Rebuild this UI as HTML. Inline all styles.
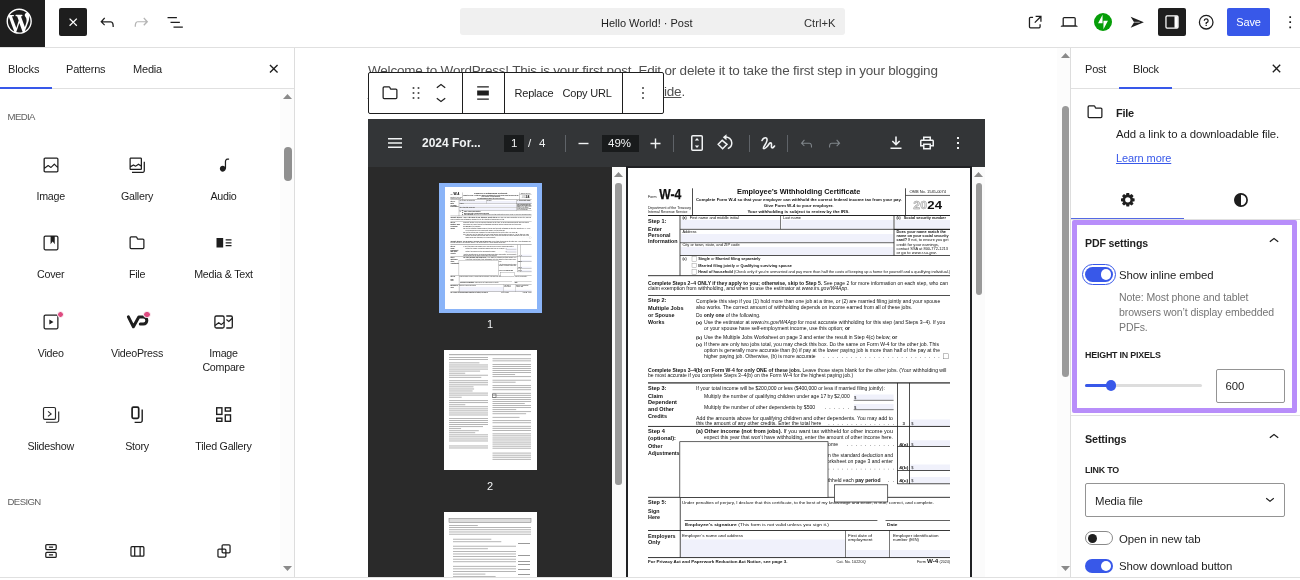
<!DOCTYPE html>
<html lang="en">
<head>
<meta charset="utf-8">
<title>Edit Post - Hello World!</title>
<style>
*{box-sizing:border-box;margin:0;padding:0}
html,body{width:1300px;height:580px;overflow:hidden;background:#fff}
body{position:relative;font-family:"Liberation Sans",sans-serif;font-size:13px;color:#1e1e1e}
.abs{position:absolute}
svg{display:block;overflow:visible}
/* top bar */
#topbar{left:0;top:0;width:1300px;height:48px;background:#fff;border-bottom:1px solid #e0e0e0}
#wplogo{left:0;top:0;width:45px;height:47px;background:#1e1e1e}
.darkbtn{background:#1e1e1e;border-radius:2px}
#cmd{left:460px;top:8px;width:385px;height:27px;background:#f0f0f0;border-radius:3px}
#save{left:1227px;top:8px;width:43px;height:28px;background:#3858e9;border-radius:2px;color:#fff;font-size:11px;letter-spacing:-0.2px;line-height:28px;text-align:center}
/* left panel */
#left{left:0;top:48px;width:295px;height:532px;background:#fff;border-right:1px solid #ddd}
#ltabs{left:0;top:0;width:294px;height:41px;border-bottom:1px solid #e0e0e0}
.tab{position:absolute;top:1px;height:40px;line-height:40px;font-size:11px;letter-spacing:-0.2px;color:#1e1e1e;white-space:nowrap}
.blk{position:absolute;width:87px;text-align:center;font-size:10.7px;letter-spacing:-0.25px;line-height:14.5px;color:#1e1e1e}
.cat{position:absolute;left:7.5px;margin-top:1px;font-size:9.6px;color:#5f5f5f;letter-spacing:-0.6px;text-transform:uppercase}
/* canvas */
#canvas{left:295px;top:48px;width:776px;height:532px;background:#fff}
.ptxt{position:absolute;font-size:13.5px;line-height:16px;color:#505050;white-space:nowrap;letter-spacing:-0.2px}
#btoolbar{left:368px;top:72px;width:296px;height:42px;background:#fff;border:1px solid #1e1e1e;border-radius:2px}
.tdiv{position:absolute;top:0;width:1px;height:40px;background:#1e1e1e}
/* pdf */
#pdf{left:368px;top:119px;width:617px;height:458px;background:#525659;overflow:hidden}
#pdfbar{left:0;top:0;width:617px;height:48px;background:#333537}
#thumbs{left:0;top:48px;width:244px;height:413px;background:#2a2a2a}
#page{left:260px;top:49px;width:341.500px;height:412px;background:#fff;overflow:hidden;will-change:transform}
/* right */
#right{left:1070px;top:48px;width:230px;height:532px;background:#fff;border-left:1px solid #ddd}
.rt{position:absolute;font-size:11.4px;line-height:14px;letter-spacing:-0.1px;color:#1e1e1e;white-space:nowrap}
.rt.note{color:#757575;font-size:10.500px}
.rt.lbl{font-size:8.9px;font-weight:bold;letter-spacing:-0.2px;line-height:12px}
.pt{position:absolute;top:0;line-height:48px;font-size:11.500px;color:#f1f3f4;white-space:nowrap}
.pdiv{position:absolute;margin-left:-1px;top:16px;width:1px;height:17px;background:#5f6368}
.thp{background:#fff}
.tl{position:absolute;width:20px;text-align:center;font-size:11px;line-height:14px;color:#f1f3f4}
#app{position:absolute;left:0;top:0;width:1300px;height:580px;overflow:hidden;background:#fff;will-change:transform}
</style>
</head>
<body>
<div id="app">
<!-- ===== TOP BAR ===== -->
<div id="topbar" class="abs"></div>
<div id="wplogo" class="abs">
  <svg class="abs" style="left:4.300px;top:5.900px" width="30.400" height="30.400" viewBox="-2 -2 24 24"><path fill="#fff" d="M20 10c0-5.510-4.490-10-10-10C4.480 0 0 4.490 0 10c0 5.520 4.480 10 10 10 5.510 0 10-4.480 10-10zM7.780 15.370L4.370 6.220c.55-.02 1.170-.08 1.170-.08.500-.06.440-1.130-.06-1.110 0 0-1.450.11-2.370.11-.18 0-.37 0-.58-.01C4.120 2.690 6.870 1.110 10 1.110c2.330 0 4.450.87 6.050 2.340-.68-.11-1.650.39-1.650 1.580 0 .74.450 1.360.9 2.100.35.610.55 1.360.55 2.460 0 1.490-1.400 5-1.400 5l-3.030-8.370c.54-.02.820-.17.820-.17.500-.05.440-1.250-.06-1.220 0 0-1.440.12-2.380.12-.87 0-2.330-.12-2.330-.12-.5-.03-.56 1.200-.06 1.220l.920.08 1.260 3.410zM17.410 10c.24-.64.740-1.870.430-4.250.7 1.290 1.050 2.710 1.050 4.250 0 3.290-1.730 6.240-4.400 7.780.97-2.590 1.940-5.200 2.920-7.780zM6.100 18.090C3.120 16.650 1.110 13.530 1.110 10c0-1.300.23-2.480.72-3.590C3.250 10.300 4.670 14.200 6.100 18.090zm4.030-6.630l2.580 6.980c-.86.290-1.760.45-2.710.45-.79 0-1.570-.11-2.290-.33.810-2.380 1.620-4.740 2.420-7.100z"/></svg>
</div>
<div class="abs darkbtn" style="left:59px;top:8px;width:27.500px;height:27.500px">
  <svg class="abs" style="left:3.800px;top:3.800px" width="20.400" height="20.400" viewBox="0 0 24 24"><path fill="#fff" d="M12 13.060l3.712 3.713 1.061-1.060L13.061 12l3.712-3.712-1.060-1.060L12 10.938 8.288 7.227l-1.061 1.060L10.939 12l-3.712 3.712 1.060 1.061L12 13.061z"/></svg>
</div>
<svg class="abs" style="left:96.8px;top:11.8px" width="20.400" height="20.400" viewBox="0 0 24 24"><path fill="#1e1e1e" d="M18.300 11.700c-.6-.6-1.400-.9-2.300-.9H6.700l2.900-3.300-1.100-1-4.500 5L8.500 16l1-1-2.700-2.700H16c.5 0 .9.200 1.300.5 1 1 1 3.400 1 4.500v.3h1.500v-.2c0-1.500 0-4.300-1.500-5.700z"/></svg>
<svg class="abs" style="left:130.8px;top:11.8px" width="20.400" height="20.400" viewBox="0 0 24 24"><path fill="#b4b4b4" d="M15.600 6.500l-1.100 1 2.900 3.300H8c-.9 0-1.700.3-2.300.9-1.400 1.500-1.400 4.200-1.400 5.600v.2h1.500v-.3c0-1.100 0-3.500 1-4.500.3-.3.700-.5 1.300-.5h9.200L14.500 15l1.100 1.100 4.600-4.600-4.600-5z"/></svg>
<svg class="abs" style="left:164.8px;top:11.8px" width="20.400" height="20.400" viewBox="0 0 24 24"><path fill="#1e1e1e" d="M3 6h11v1.500H3V6Zm3.500 5.500h11V13h-11v-1.500ZM21 17H10v1.500h11V17Z"/></svg>

<div id="cmd" class="abs">
  <span class="abs" style="left:141px;top:1.5px;line-height:27px;font-size:11px;color:#1e1e1e;white-space:nowrap">Hello World! · Post</span>
  <span class="abs" style="left:344px;top:2px;line-height:27px;font-size:11.2px;color:#333;white-space:nowrap">Ctrl+K</span>
</div>

<svg class="abs" style="left:1024.8px;top:11.8px" width="20.400" height="20.400" viewBox="0 0 24 24"><path fill="#1e1e1e" d="M19.500 4.500h-7V6h4.440l-5.970 5.970 1.060 1.060L18 7.060v4.440h1.500v-7Zm-13 1a2 2 0 0 0-2 2v10a2 2 0 0 0 2 2h10a2 2 0 0 0 2-2v-3H17v3a.5.500 0 0 1-.5.500h-10a.5.500 0 0 1-.5-.5v-10a.5.500 0 0 1 .5-.5h3V5.500h-3Z"/></svg>
<svg class="abs" style="left:1058.8px;top:11.8px" width="20.400" height="20.400" viewBox="0 0 24 24"><path fill="#1e1e1e" d="M20.500 16h-.7V8c0-1.100-.9-2-2-2H6.200c-1.100 0-2 .9-2 2v8h-.7c-.8 0-1.500.7-1.500 1.500h20c0-.8-.7-1.500-1.500-1.500zM5.700 8c0-.3.200-.5.500-.5h11.600c.3 0 .5.200.5.500v7.600H5.700V8z"/></svg>
<svg class="abs" style="left:1093.500px;top:13px" width="18" height="18" viewBox="0 0 32 32"><circle cx="16" cy="16" r="16" fill="#069e08"/><path fill="#fff" d="M15.200 2.900v15.500H7.200zM16.800 29.100V13.600h8z"/></svg>
<svg class="abs" style="left:1129px;top:14px" width="16.500" height="16.500" viewBox="0 0 20 20"><path fill="#1e1e1e" d="M2 3.200l16 6.800-16 6.800 4.200-6.800z"/><path d="M6.200 10H13" stroke="#bdbdbd" stroke-width="1.100"/></svg>
<div class="abs darkbtn" style="left:1158px;top:8px;width:27.500px;height:27.500px">
  <svg class="abs" style="left:4px;top:4px" width="20" height="20" viewBox="0 0 24 24"><rect x="4.750" y="4.750" width="14.500" height="14.500" rx="1.250" fill="none" stroke="#fff" stroke-width="1.500"/><path fill="#fff" d="M15 5h4v14h-4z"/></svg>
</div>
<svg class="abs" style="left:1195.8px;top:11.8px" width="20.400" height="20.400" viewBox="0 0 24 24"><path fill="#1e1e1e" d="M12 4.750a7.250 7.250 0 100 14.500 7.250 7.250 0 000-14.500zM3.250 12a8.750 8.750 0 1117.500 0 8.750 8.750 0 01-17.500 0zM12 8.750a1.500 1.500 0 01.167 2.990c-.465.052-.917.440-.917 1.010V14h1.500v-.845A3 3 0 109 10.250h1.500a1.500 1.500 0 011.500-1.500zM11.250 15v1.500h1.500V15h-1.500z"/></svg>
<div id="save" class="abs">Save</div>
<svg class="abs" style="left:1279.8px;top:11.8px" width="20.400" height="20.400" viewBox="0 0 24 24"><path fill="#1e1e1e" d="M13 19h-2v-2h2v2zm0-6h-2v-2h2v2zm0-6h-2V5h2v2z"/></svg>

<div id="left" class="abs">
<div id="ltabs" class="abs">
<span class="tab" style="left:8px">Blocks</span><span class="tab" style="left:66px">Patterns</span><span class="tab" style="left:133px">Media</span>
<div class="abs" style="left:0;top:39px;width:52px;height:2px;background:#3858e9"></div>
<svg class="abs" style="left:262.700px;top:9.700px" width="21.500" height="21.500" viewBox="0 0 24 24"><path fill="#1e1e1e" d="M12 13.060l3.712 3.713 1.061-1.060L13.061 12l3.712-3.712-1.060-1.060L12 10.938 8.288 7.227l-1.061 1.060L10.939 12l-3.712 3.712 1.060 1.061L12 13.061z"/></svg>
</div>
<div class="cat" style="top:62px">Media</div>
<div class="cat" style="top:447px">Design</div>
<svg class="abs" style="left:40.7px;top:106.5px" width="20" height="20" viewBox="0 0 24 24" fill="#1e1e1e"><path d="M19 3H5c-1.100 0-2 .9-2 2v14c0 1.100.9 2 2 2h14c1.100 0 2-.9 2-2V5c0-1.100-.9-2-2-2zM5 4.500h14c.3 0 .5.200.5.500v8.400l-3-2.900c-.3-.3-.8-.3-1 0L11.900 14 9 12c-.3-.2-.6-.2-.8 0l-3.600 2.600V5c-.1-.3.100-.5.400-.5zm14 15H5c-.3 0-.5-.2-.5-.5v-2.400l4.100-3 3 1.900c.3.200.7.200.9-.1L16 12l3.500 3.400V19c0 .3-.2.500-.5.500z"/></svg>
<div class="blk" style="left:7.2px;top:140.5px">Image</div>
<svg class="abs" style="left:127.0px;top:106.5px" width="20" height="20" viewBox="0 0 24 24" fill="#1e1e1e"><path d="M16.375 4.500H4.625a.125.125 0 0 0-.125.125v8.254l2.859-1.540a.750.750 0 0 1 .680-.016l2.384 1.142 2.890-2.074a.750.750 0 0 1 .874 0l2.313 1.660V4.625a.125.125 0 0 0-.125-.125Zm.125 9.398-2.750-1.975-2.813 2.020a.750.750 0 0 1-.760.067l-2.444-1.170L4.500 14.583v1.792c0 .69.056.125.125.125h11.750a.125.125 0 0 0 .125-.125v-2.477ZM4.625 3C3.728 3 3 3.728 3 4.625v11.750C3 17.273 3.728 18 4.625 18h11.750c.898 0 1.625-.727 1.625-1.625V4.625C18 3.728 17.273 3 16.375 3H4.625ZM20 8v11c0 .69-.31 1-.999 1H6v1.500h13.001c1.520 0 2.499-.982 2.499-2.500V8H20Z" fill-rule="evenodd"/></svg>
<div class="blk" style="left:93.5px;top:140.5px">Gallery</div>
<svg class="abs" style="left:213.5px;top:106.5px" width="20" height="20" viewBox="0 0 24 24" fill="#1e1e1e"><path d="M17.700 4.300c-1.200 0-2.800 0-3.800 1-.6.600-.9 1.500-.9 2.600V14c-.6-.6-1.500-1-2.500-1C8.600 13 7 14.600 7 16.500S8.600 20 10.500 20c1.500 0 2.800-1 3.300-2.300.5-.8.700-1.800.7-2.500V7.900c0-.7.200-1.200.5-1.600.6-.6 1.800-.6 2.800-.6h.3V4.300h-.4z"/></svg>
<div class="blk" style="left:180.0px;top:140.5px">Audio</div>
<svg class="abs" style="left:40.7px;top:185.0px" width="20" height="20" viewBox="0 0 24 24" fill="#1e1e1e"><path d="M18.700 3H5.300C4 3 3 4 3 5.300v13.400C3 20 4 21 5.300 21h13.400c1.300 0 2.300-1 2.300-2.300V5.300C21 4 20 3 18.700 3zm.8 15.700c0 .4-.4.800-.8.800H5.300c-.4 0-.8-.4-.8-.8V5.300c0-.4.400-.8.800-.8h6.200v8.900l2.500-3.100 2.500 3.100V4.500h2.200c.4 0 .8.400.8.800v13.400z"/></svg>
<div class="blk" style="left:7.2px;top:219.0px">Cover</div>
<svg class="abs" style="left:127.0px;top:185.0px" width="20" height="20" viewBox="0 0 24 24" fill="#1e1e1e"><path d="M12.848 8a1 1 0 0 1-.914-.594l-.723-1.630a.5.500 0 0 0-.447-.276H5a.5.500 0 0 0-.5.500v11.500a.5.500 0 0 0 .5.500h14a.5.500 0 0 0 .5-.5v-9A.5.500 0 0 0 19 8h-6.152Zm.612-1.500a.5.500 0 0 1-.462-.31l-.445-1.084A2 2 0 0 0 10.763 4H5a2 2 0 0 0-2 2v11.500a2 2 0 0 0 2 2h14a2 2 0 0 0 2-2v-9a2 2 0 0 0-2-2h-5.540Z" fill-rule="evenodd"/></svg>
<div class="blk" style="left:93.5px;top:219.0px">File</div>
<svg class="abs" style="left:213.5px;top:185.0px" width="20" height="20" viewBox="0 0 24 24" fill="#1e1e1e"><path d="M3 6v11.500h8V6H3Zm11 3h7V7.500h-7V9Zm7 3.500h-7V11h7v1.500ZM14 16h7v-1.500h-7V16Z"/></svg>
<div class="blk" style="left:180.0px;top:219.0px">Media &amp; Text</div>
<svg class="abs" style="left:40.7px;top:264.0px" width="20" height="20" viewBox="0 0 24 24" fill="#1e1e1e"><path d="M18.700 3H5.300C4 3 3 4 3 5.300v13.400C3 20 4 21 5.300 21h13.400c1.300 0 2.300-1 2.300-2.300V5.300C21 4 20 3 18.700 3zm.8 15.700c0 .4-.4.800-.8.800H5.300c-.4 0-.8-.4-.8-.8V5.300c0-.4.400-.8.800-.8h13.400c.4 0 .8.400.8.800v13.400zM10 15l5-3-5-3v6z"/></svg>
<div class="blk" style="left:7.2px;top:297.5px">Video</div>
<svg class="abs" style="left:125px;top:264px" width="24" height="20" viewBox="125 312 24 20" fill="none" stroke="#1e1e1e"><path stroke-width="3" stroke-linecap="round" stroke-linejoin="round" d="M128.400 316.800L133.400 326.800L138.800 317H143.300C148 317 148 324 143.300 324H140.300"/></svg>
<div class="blk" style="left:93.5px;top:297.5px">VideoPress</div>
<svg class="abs" style="left:212px;top:264px" width="24" height="20" viewBox="212 312 24 20" fill="none" stroke="#1e1e1e"><rect x="214.9" y="316" width="9.2" height="12" rx="1.5" stroke-width="1.3"/><path stroke-width="1.2" d="M215 325.600l3.700-2.800 2.500 1.800 3-2.400"/><path stroke-width="1.3" d="M226.300 316h4.700a1.300 1.300 0 0 1 1.300 1.300v9.400a1.300 1.300 0 0 1-1.300 1.300h-4.700"/><path stroke-width="1.300" d="M226.400 319.600l2.400 1.800 3.800-3.500"/></svg>
<div class="blk" style="left:180.0px;top:297.5px">Image<br>Compare</div>
<svg class="abs" style="left:41px;top:356px" width="20" height="20" viewBox="41 404 20 20" fill="none" stroke="#1e1e1e"><g stroke-width="1.150" stroke="#2a2a2a"><rect x="43.500" y="407.500" width="12" height="11.800" rx="1.300"/><path d="M48 411.400l3.100 2.500-3.100 2.500"/><path d="M58.700 411.500v9a1.700 1.700 0 0 1-1.700 1.700h-11"/></g></svg>
<div class="blk" style="left:7.2px;top:390.5px">Slideshow</div>
<svg class="abs" style="left:127px;top:356px" width="20" height="20" viewBox="127 404 20 20" fill="none" stroke="#1e1e1e"><rect x="132.100" y="407.100" width="6.600" height="11.200" rx="1.300" stroke-width="1.700"/><path stroke-width="1.400" d="M142.200 409.600v11a1.800 1.800 0 0 1-1.800 1.800h-5.800"/></svg>
<div class="blk" style="left:93.5px;top:390.5px">Story</div>
<svg class="abs" style="left:213px;top:356px" width="22" height="22" viewBox="213 404 22 22" fill="none" stroke="#1e1e1e"><g stroke-width="1.400"><rect x="216.700" y="407.800" width="5.200" height="6.600"/><rect x="225.300" y="407.800" width="5.200" height="3.300"/><rect x="216.700" y="418.200" width="5.200" height="3.100"/><rect x="225.300" y="414.900" width="5.200" height="6.400"/></g></svg>
<div class="blk" style="left:180.0px;top:390.5px">Tiled Gallery</div>
<svg class="abs" style="left:40.7px;top:493.0px" width="20" height="20" viewBox="0 0 24 24" fill="#1e1e1e"><path fill="none" stroke="#1e1e1e" stroke-width="1.500" d="M7 4.250h10c.7 0 1.250.55 1.250 1.250V9c0 .7-.55 1.250-1.250 1.250H7c-.7 0-1.250-.55-1.250-1.250V5.500c0-.7.550-1.250 1.250-1.250zM7 13.750h10c.7 0 1.250.55 1.250 1.250v3.500c0 .7-.55 1.250-1.250 1.250H7c-.7 0-1.250-.55-1.250-1.250V15c0-.7.550-1.250 1.250-1.250zM9.500 7.250h5M9.500 16.750h5"/></svg>
<svg class="abs" style="left:127.0px;top:493.0px" width="20" height="20" viewBox="0 0 24 24" fill="#1e1e1e"><path fill="none" stroke="#1e1e1e" stroke-width="1.500" d="M6 6.750h13c.7 0 1.250.55 1.250 1.250v9c0 .7-.55 1.250-1.250 1.250H6c-.7 0-1.250-.55-1.250-1.250V8c0-.7.550-1.250 1.250-1.250zM9.250 7v11M15.750 7v11"/></svg>
<svg class="abs" style="left:213.5px;top:493.0px" width="20" height="20" viewBox="0 0 24 24" fill="#1e1e1e"><path d="M18 4h-7c-1.100 0-2 .9-2 2v3H6c-1.100 0-2 .9-2 2v7c0 1.100.9 2 2 2h7c1.100 0 2-.9 2-2v-3h3c1.100 0 2-.9 2-2V6c0-1.100-.9-2-2-2zm-4.500 14c0 .3-.2.500-.5.500H6c-.3 0-.5-.2-.5-.5v-7c0-.3.200-.5.500-.5h3V13c0 1.100.9 2 2 2h2.500v3zm0-4.500H11c-.3 0-.5-.2-.5-.5v-2.500H13c.3 0 .5.200.5.500v2.500zm5-.5c0 .3-.2.500-.5.500h-3V11c0-1.100-.9-2-2-2h-2.500V6c0-.3.200-.5.500-.5h7c.3 0 .5.200.5.500v7z"/></svg>
<div class="abs" style="left:58px;top:264px;width:7.2px;height:7.2px;margin:-1.100px;border:1px solid #fff;border-radius:50%;background:#de4b80"></div>
<div class="abs" style="left:144.5px;top:264px;width:7.2px;height:7.2px;margin:-1.100px;border:1px solid #fff;border-radius:50%;background:#de4b80"></div>
<div class="abs" style="left:280px;top:41px;width:14px;height:488px;background:#fcfcfc"></div>
<div class="abs" style="left:284px;top:99px;width:8px;height:34px;border-radius:4px;background:#8f8f8f"></div>
<svg class="abs" style="left:283px;top:46px" width="9" height="5" viewBox="0 0 9 5"><path fill="#8a8a8a" d="M0 5L4.500 0 9 5z"/></svg>
<svg class="abs" style="left:283px;top:518px" width="9" height="5" viewBox="0 0 9 5"><path fill="#8a8a8a" d="M0 0L4.500 5 9 0z"/></svg>
</div>
<div id="canvas" class="abs"></div>
<div class="ptxt" style="left:368px;top:62.5px" id="p1">Welcome to WordPress! This is your first post. Edit or delete it to take the first step in your blogging</div>
<div class="ptxt" style="left:368px;width:317px;top:83.5px;text-align:justify;text-align-last:justify" id="p2">journey. To get help, read the <span style="text-decoration:underline">WordPress guide</span>.</div>
<!-- canvas scrollbar -->
<div class="abs" style="left:1057px;top:48px;width:13px;height:529px;background:#fcfcfc"></div>
<div class="abs" style="left:1062px;top:106px;width:7px;height:271px;border-radius:4px;background:#9a9a9a"></div>
<svg class="abs" style="left:1061px;top:53px" width="9" height="5" viewBox="0 0 9 5"><path fill="#8a8a8a" d="M0 5L4.500 0 9 5z"/></svg>
<svg class="abs" style="left:1061px;top:566px" width="9" height="5" viewBox="0 0 9 5"><path fill="#8a8a8a" d="M0 0L4.500 5 9 0z"/></svg>

<div id="pdf" class="abs">
<div id="pdfbar" class="abs">
 <svg class="abs" style="left:19px;top:16px" width="16" height="16" viewBox="0 0 16 16"><path fill="#f1f3f4" d="M1 3h14v1.600H1zM1 7.200h14v1.600H1zM1 11.400h14V13H1z"/></svg>
 <span class="pt" style="left:54px;font-weight:bold;font-size:12px">2024 For...</span>
 <div class="abs" style="left:136px;top:15.500px;width:20px;height:17.500px;background:#191b1c"></div>
 <span class="pt" style="left:143px">1</span><span class="pt" style="left:160px">/</span><span class="pt" style="left:171px">4</span>
 <div class="pdiv" style="left:198px"></div>
 <svg class="abs" style="left:209px;top:18px" width="13" height="13" viewBox="0 0 13 13"><path fill="#f1f3f4" d="M1.500 5.800h10v1.400h-10z"/></svg>
 <div class="abs" style="left:233.500px;top:15.500px;width:37.500px;height:17.500px;background:#191b1c"></div>
 <span class="pt" style="left:240px">49%</span>
 <svg class="abs" style="left:281px;top:18px" width="13" height="13" viewBox="0 0 13 13"><path fill="#f1f3f4" d="M1.500 5.800h4.300V1.500h1.400v4.300h4.300v1.400H7.200v4.300H5.800V7.200H1.500z"/></svg>
 <div class="pdiv" style="left:305.500px"></div>
 <svg class="abs" style="left:320px;top:15px" width="18" height="18" viewBox="0 0 18 18"><path fill="none" stroke="#f1f3f4" stroke-width="1.500" d="M4.750 1.750h8.500c.55 0 1 .45 1 1v12.500c0 .55-.45 1-1 1h-8.500c-.55 0-1-.45-1-1V2.750c0-.55.450-1 1-1z"/><path fill="#f1f3f4" d="M9 4l2.200 2.600H6.800zM9 14l2.200-2.600H6.800z"/></svg>
 <svg class="abs" style="left:348px;top:15px" width="18" height="18" viewBox="0 0 18 18"><path fill="none" stroke="#f1f3f4" stroke-width="1.500" d="M6.200 6.300L2.200 10.300l4.400 4.400 4.400-4.400zM8.500 3.200c4-.6 7.300 2 7.300 5.800 0 2.600-1.600 4.700-4 5.600"/><path fill="#f1f3f4" d="M10.500 0.300L6.800 3.300l3.700 3z"/></svg>
 <div class="pdiv" style="left:381.500px"></div>
 <svg class="abs" style="left:391px;top:15px" width="18" height="18" viewBox="0 0 18 18"><path fill="none" stroke="#f1f3f4" stroke-width="1.600" stroke-linecap="round" d="M3 6.500c1.500-3.500 5.500-4 5 0C7.500 10 3.500 13.500 4.500 14.500c1 .8 4-2 5.500-4.500 1-1.500 2.500-1.500 2.500 0 0 2-.5 3.500.5 3.800.8.200 1.700-.6 2.500-1.800"/></svg>
 <div class="pdiv" style="left:419.500px"></div>
 <svg class="abs" style="left:430px;top:16px" width="17" height="17" viewBox="0 0 24 24"><path fill="#80868b" d="M18.300 11.700c-.6-.6-1.400-.9-2.300-.9H6.700l2.900-3.300-1.100-1-4.500 5L8.500 16l1-1-2.700-2.700H16c.5 0 .9.200 1.300.5 1 1 1 3.400 1 4.500v.3h1.500v-.2c0-1.500 0-4.300-1.500-5.700z"/></svg>
 <svg class="abs" style="left:458px;top:16px" width="17" height="17" viewBox="0 0 24 24"><path fill="#80868b" d="M15.600 6.500l-1.100 1 2.900 3.300H8c-.9 0-1.700.3-2.300.9-1.400 1.500-1.400 4.200-1.400 5.600v.2h1.500v-.3c0-1.100 0-3.500 1-4.500.3-.3.700-.5 1.300-.5h9.200L14.500 15l1.100 1.100 4.600-4.600-4.600-5z"/></svg>
 <svg class="abs" style="left:520px;top:16px" width="16" height="16" viewBox="0 0 16 16"><path fill="#f1f3f4" d="M7.200 1.500h1.600v6.200l2.300-2.300 1.100 1.100L8 10.700 3.800 6.500l1.100-1.100 2.300 2.300zM2.500 12.400h11V14h-11z"/></svg>
 <svg class="abs" style="left:551px;top:16px" width="16" height="16" viewBox="0 0 16 16"><path fill="#f1f3f4" d="M4 1.500h8v3h1.300c1 0 1.700.7 1.700 1.700v5.300h-3v3H4v-3H1V6.200c0-1 .7-1.700 1.700-1.700H4zm1.500 1.400v1.600h5V2.900zM2.500 6.300V10H4V8.500h8V10h1.500V6.300c0-.2-.1-.3-.3-.3H2.800c-.2 0-.3.100-.3.300zm3 3.700v3h5v-3z"/></svg>
 <svg class="abs" style="left:582px;top:16px" width="16" height="16" viewBox="0 0 16 16"><path fill="#f1f3f4" d="M7 2h2v2H7zM7 7h2v2H7zM7 12h2v2H7z"/></svg>
</div>
<div id="thumbs" class="abs">
 <div class="abs" style="left:70.500px;top:63.500px;width:103.500px;height:130.500px;background:#8ab4f8;margin-top:-48px"></div>
 <div class="abs thp" style="left:76.500px;top:20px;width:92px;height:121.500px"></div>
 <svg class="abs" style="left:76.500px;top:20px" width="92" height="110.8" viewBox="0 0 684 824" font-family="Liberation Sans, sans-serif" fill="#111" xml:space="preserve">
<rect x="106.0" y="104.0" width="198.0" height="17.6" fill="#f0f1fb"/>
<rect x="307.0" y="104.0" width="224.0" height="17.6" fill="#f0f1fb"/>
<rect x="534.0" y="104.0" width="110.0" height="17.6" fill="#f0f1fb"/>
<rect x="106.0" y="132.0" width="425.0" height="16.6" fill="#f0f1fb"/>
<rect x="106.0" y="158.0" width="425.0" height="16.0" fill="#f0f1fb"/>
<rect x="452.0" y="453.0" width="79.2" height="11.0" fill="#f0f1fb"/>
<rect x="452.0" y="472.0" width="79.2" height="11.0" fill="#f0f1fb"/>
<rect x="565.0" y="503.0" width="79.0" height="13.0" fill="#f0f1fb"/>
<rect x="565.0" y="544.6" width="79.0" height="11.4" fill="#f0f1fb"/>
<rect x="565.0" y="593.0" width="79.0" height="11.6" fill="#f0f1fb"/>
<rect x="565.0" y="618.0" width="79.0" height="12.8" fill="#f0f1fb"/>
<rect x="106.0" y="743.0" width="328.0" height="35.0" fill="#f0f1fb"/>
<rect x="436.6" y="764.0" width="85.4" height="14.0" fill="#f0f1fb"/>
<rect x="524.6" y="764.0" width="119.4" height="14.0" fill="#f0f1fb"/>
<text x="40.0" y="59.5" font-size="6.60" textLength="17.0" lengthAdjust="spacingAndGlyphs">Form</text>
<text x="62.6" y="61.8" font-size="28.00" font-weight="bold" textLength="44.0" lengthAdjust="spacingAndGlyphs" stroke="#111" stroke-width="0.5">W-4</text>
<text x="40.0" y="82.0" font-size="6.80" textLength="86.0" lengthAdjust="spacingAndGlyphs">Department of the Treasury</text>
<text x="40.0" y="90.0" font-size="6.80" textLength="79.0" lengthAdjust="spacingAndGlyphs">Internal Revenue Service</text>
<rect x="128.4" y="40.6" width="1.6" height="54.4" fill="#222"/>
<text x="218.0" y="51.3" font-size="15.80" font-weight="bold" textLength="246.6" lengthAdjust="spacingAndGlyphs">Employee’s Withholding Certificate</text>
<text x="136.0" y="66.0" font-size="8.60" font-weight="bold" textLength="411.4" lengthAdjust="spacingAndGlyphs">Complete Form W-4 so that your employer can withhold the correct federal income tax from your pay.</text>
<text x="271.6" y="78.0" font-size="8.60" font-weight="bold" textLength="139.6" lengthAdjust="spacingAndGlyphs">Give Form W-4 to your employer.</text>
<text x="238.8" y="90.0" font-size="8.60" font-weight="bold" textLength="204.2" lengthAdjust="spacingAndGlyphs">Your withholding is subject to review by the IRS.</text>
<rect x="554.2" y="40.6" width="1.6" height="54.4" fill="#222"/>
<text x="563.0" y="50.2" font-size="6.80" textLength="73.0" lengthAdjust="spacingAndGlyphs">OMB No. 1545-0074</text>
<rect x="555.0" y="53.9" width="89.0" height="1.4" fill="#222"/>
<text x="570.6" y="82.1" font-size="22.00" font-weight="bold" fill="#e4e4e4" textLength="27.4" lengthAdjust="spacingAndGlyphs" stroke="#8a8a8a" stroke-width="0.8">20</text>
<text x="598.6" y="82.1" font-size="22.00" font-weight="bold" textLength="29.4" lengthAdjust="spacingAndGlyphs">24</text>
<rect x="40.0" y="94.0" width="604.0" height="2.0" fill="#222"/>
<text x="40.0" y="109.9" font-size="11.00" font-weight="bold" textLength="36.8" lengthAdjust="spacingAndGlyphs">Step 1:</text>
<text x="40.0" y="126.2" font-size="10.20" font-weight="bold" textLength="28.0" lengthAdjust="spacingAndGlyphs">Enter</text>
<text x="40.0" y="138.2" font-size="10.20" font-weight="bold" textLength="45.0" lengthAdjust="spacingAndGlyphs">Personal</text>
<text x="40.0" y="150.4" font-size="10.20" font-weight="bold" textLength="59.2" lengthAdjust="spacingAndGlyphs">Information</text>
<rect x="103.2" y="95.0" width="1.6" height="120.4" fill="#222"/>
<text x="109.0" y="102.2" font-size="6.40" font-weight="bold" textLength="8.0" lengthAdjust="spacingAndGlyphs">(a)</text>
<text x="123.4" y="102.3" font-size="6.60" textLength="98.2" lengthAdjust="spacingAndGlyphs">First name and middle initial</text>
<rect x="304.8" y="95.0" width="1.2" height="27.6" fill="#222"/>
<text x="310.0" y="102.3" font-size="6.60" textLength="36.0" lengthAdjust="spacingAndGlyphs">Last name</text>
<rect x="104.0" y="121.7" width="428.0" height="1.8" fill="#444"/>
<text x="109.0" y="130.1" font-size="6.60" textLength="28.0" lengthAdjust="spacingAndGlyphs">Address</text>
<rect x="104.0" y="148.9" width="428.0" height="1.4" fill="#222"/>
<text x="109.0" y="155.9" font-size="6.60" textLength="114.4" lengthAdjust="spacingAndGlyphs">City or town, state, and ZIP code</text>
<rect x="104.0" y="174.2" width="540.0" height="1.6" fill="#222"/>
<rect x="531.2" y="95.0" width="1.6" height="80.0" fill="#222"/>
<text x="537.0" y="102.2" font-size="6.40" font-weight="bold" textLength="8.0" lengthAdjust="spacingAndGlyphs">(b)</text>
<text x="551.6" y="102.4" font-size="7.00" font-weight="bold" textLength="84.4" lengthAdjust="spacingAndGlyphs">Social security number</text>
<rect x="532.0" y="121.6" width="112.0" height="2.4" fill="#222"/>
<text x="537.0" y="130.2" font-size="7.00" font-weight="bold" textLength="99.0" lengthAdjust="spacingAndGlyphs">Does your name match the</text>
<text x="537.0" y="138.2" font-size="7.00" font-weight="bold" textLength="104.0" lengthAdjust="spacingAndGlyphs">name on your social security</text>
<text x="537.0" y="146.4" font-size="6.80" textLength="104.0" lengthAdjust="spacingAndGlyphs"><tspan font-weight="bold">card?</tspan> If not, to ensure you get</text>
<text x="537.0" y="155.2" font-size="6.80" textLength="85.0" lengthAdjust="spacingAndGlyphs">credit for your earnings,</text>
<text x="537.0" y="163.6" font-size="6.80" textLength="103.0" lengthAdjust="spacingAndGlyphs">contact SSA at 800-772-1213</text>
<text x="537.0" y="171.8" font-size="6.80" textLength="81.0" lengthAdjust="spacingAndGlyphs">or go to <tspan font-style="italic">www.ssa.gov</tspan>.</text>
<text x="109.0" y="184.2" font-size="6.40" font-weight="bold" textLength="8.0" lengthAdjust="spacingAndGlyphs">(c)</text>
<rect x="128.0" y="177.2" width="8.6" height="9.2" fill="#fff" stroke="#777" stroke-width="0.7"/>
<rect x="128.0" y="190.4" width="8.6" height="9.2" fill="#fff" stroke="#777" stroke-width="0.7"/>
<rect x="128.0" y="203.2" width="8.6" height="9.2" fill="#fff" stroke="#777" stroke-width="0.7"/>
<text x="140.6" y="184.5" font-size="7.00" textLength="124.2" lengthAdjust="spacingAndGlyphs"><tspan font-weight="bold">Single</tspan> or <tspan font-weight="bold">Married filing separately</tspan></text>
<text x="140.6" y="197.7" font-size="7.00" textLength="187.4" lengthAdjust="spacingAndGlyphs"><tspan font-weight="bold">Married filing jointly</tspan> or <tspan font-weight="bold">Qualifying surviving spouse</tspan></text>
<text x="140.6" y="210.3" font-size="6.60" textLength="503.4" lengthAdjust="spacingAndGlyphs"><tspan font-weight="bold">Head of household</tspan> (Check only if you’re unmarried and pay more than half the costs of keeping up a home for yourself and a qualifying individual.)</text>
<rect x="40.0" y="214.5" width="604.0" height="1.8" fill="#222"/>
<text x="40.0" y="233.1" font-size="9.00" textLength="600.0" lengthAdjust="spacingAndGlyphs"><tspan font-weight="bold">Complete Steps 2–4 ONLY if they apply to you; otherwise, skip to Step 5.</tspan> See page 2 for more information on each step, who can</text>
<text x="40.0" y="243.9" font-size="9.00" textLength="401.2" lengthAdjust="spacingAndGlyphs">claim exemption from withholding, and when to use the estimator at <tspan font-style="italic">www.irs.gov/W4App</tspan>.</text>
<rect x="40.0" y="254.0" width="604.0" height="1.6" fill="#222"/>
<text x="40.0" y="268.9" font-size="11.00" font-weight="bold" textLength="36.8" lengthAdjust="spacingAndGlyphs">Step 2:</text>
<text x="40.0" y="284.8" font-size="10.20" font-weight="bold" textLength="71.0" lengthAdjust="spacingAndGlyphs">Multiple Jobs</text>
<text x="40.0" y="298.4" font-size="10.20" font-weight="bold" textLength="53.0" lengthAdjust="spacingAndGlyphs">or Spouse</text>
<text x="40.0" y="311.0" font-size="10.20" font-weight="bold" textLength="33.0" lengthAdjust="spacingAndGlyphs">Works</text>
<text x="136.0" y="269.9" font-size="9.00" textLength="488.4" lengthAdjust="spacingAndGlyphs">Complete this step if you (1) hold more than one job at a time, or (2) are married filing jointly and your spouse</text>
<text x="136.0" y="281.1" font-size="9.00" textLength="432.4" lengthAdjust="spacingAndGlyphs">also works. The correct amount of withholding depends on income earned from all of these jobs.</text>
<text x="136.0" y="298.5" font-size="9.00" textLength="128.8" lengthAdjust="spacingAndGlyphs">Do <tspan font-weight="bold">only one</tspan> of the following.</text>
<text x="136.0" y="312.0" font-size="8.60" font-weight="bold" textLength="12.0" lengthAdjust="spacingAndGlyphs">(a)</text>
<text x="152.0" y="312.1" font-size="9.00" textLength="482.6" lengthAdjust="spacingAndGlyphs">Use the estimator at <tspan font-style="italic">www.irs.gov/W4App</tspan> for most accurate withholding for this step (and Steps 3–4). If you</text>
<text x="152.0" y="324.5" font-size="9.00" textLength="292.0" lengthAdjust="spacingAndGlyphs">or your spouse have self-employment income, use this option; <tspan font-weight="bold">or</tspan></text>
<text x="136.0" y="341.0" font-size="8.60" font-weight="bold" textLength="12.0" lengthAdjust="spacingAndGlyphs">(b)</text>
<text x="152.0" y="341.1" font-size="9.00" textLength="386.4" lengthAdjust="spacingAndGlyphs">Use the Multiple Jobs Worksheet on page 3 and enter the result in Step 4(c) below; <tspan font-weight="bold">or</tspan></text>
<text x="136.0" y="356.0" font-size="8.60" font-weight="bold" textLength="12.0" lengthAdjust="spacingAndGlyphs">(c)</text>
<text x="152.0" y="356.1" font-size="9.00" textLength="470.0" lengthAdjust="spacingAndGlyphs">If there are only two jobs total, you may check this box. Do the same on Form W-4 for the other job. This</text>
<text x="152.0" y="367.1" font-size="9.00" textLength="472.0" lengthAdjust="spacingAndGlyphs">option is generally more accurate than (b) if pay at the lower paying job is more than half of the pay at the</text>
<text x="152.0" y="379.8" font-size="9.00" textLength="223.2" lengthAdjust="spacingAndGlyphs">higher paying job. Otherwise, (b) is more accurate</text>
<rect x="621.2" y="378.4" width="1.2" height="1.2" fill="#333"/>
<rect x="612.0" y="378.4" width="1.2" height="1.2" fill="#333"/>
<rect x="602.8" y="378.4" width="1.2" height="1.2" fill="#333"/>
<rect x="593.6" y="378.4" width="1.2" height="1.2" fill="#333"/>
<rect x="584.4" y="378.4" width="1.2" height="1.2" fill="#333"/>
<rect x="575.2" y="378.4" width="1.2" height="1.2" fill="#333"/>
<rect x="566.0" y="378.4" width="1.2" height="1.2" fill="#333"/>
<rect x="556.8" y="378.4" width="1.2" height="1.2" fill="#333"/>
<rect x="547.6" y="378.4" width="1.2" height="1.2" fill="#333"/>
<rect x="538.4" y="378.4" width="1.2" height="1.2" fill="#333"/>
<rect x="529.2" y="378.4" width="1.2" height="1.2" fill="#333"/>
<rect x="520.0" y="378.4" width="1.2" height="1.2" fill="#333"/>
<rect x="510.8" y="378.4" width="1.2" height="1.2" fill="#333"/>
<rect x="501.6" y="378.4" width="1.2" height="1.2" fill="#333"/>
<rect x="492.4" y="378.4" width="1.2" height="1.2" fill="#333"/>
<rect x="483.2" y="378.4" width="1.2" height="1.2" fill="#333"/>
<rect x="474.0" y="378.4" width="1.2" height="1.2" fill="#333"/>
<rect x="464.8" y="378.4" width="1.2" height="1.2" fill="#333"/>
<rect x="455.6" y="378.4" width="1.2" height="1.2" fill="#333"/>
<rect x="446.4" y="378.4" width="1.2" height="1.2" fill="#333"/>
<rect x="437.2" y="378.4" width="1.2" height="1.2" fill="#333"/>
<rect x="428.0" y="378.4" width="1.2" height="1.2" fill="#333"/>
<rect x="418.8" y="378.4" width="1.2" height="1.2" fill="#333"/>
<rect x="409.6" y="378.4" width="1.2" height="1.2" fill="#333"/>
<rect x="400.4" y="378.4" width="1.2" height="1.2" fill="#333"/>
<rect x="391.2" y="378.4" width="1.2" height="1.2" fill="#333"/>
<rect x="630.6" y="371.6" width="10.0" height="10.0" fill="#fff" stroke="#666" stroke-width="0.8"/>
<text x="40.0" y="407.1" font-size="9.00" textLength="596.8" lengthAdjust="spacingAndGlyphs"><tspan font-weight="bold">Complete Steps 3–4(b) on Form W-4 for only ONE of these jobs.</tspan> Leave those steps blank for the other jobs. (Your withholding will</text>
<text x="40.0" y="418.5" font-size="9.00" textLength="410.4" lengthAdjust="spacingAndGlyphs">be most accurate if you complete Steps 3–4(b) on the Form W-4 for the highest paying job.)</text>
<rect x="40.0" y="428.5" width="604.0" height="2.6" fill="#333"/>
<text x="40.0" y="444.5" font-size="11.00" font-weight="bold" textLength="36.8" lengthAdjust="spacingAndGlyphs">Step 3:</text>
<text x="40.0" y="460.4" font-size="10.20" font-weight="bold" textLength="30.0" lengthAdjust="spacingAndGlyphs">Claim</text>
<text x="40.0" y="472.6" font-size="10.20" font-weight="bold" textLength="58.0" lengthAdjust="spacingAndGlyphs">Dependent</text>
<text x="40.0" y="486.0" font-size="10.20" font-weight="bold" textLength="52.0" lengthAdjust="spacingAndGlyphs">and Other</text>
<text x="40.0" y="499.0" font-size="10.20" font-weight="bold" textLength="38.0" lengthAdjust="spacingAndGlyphs">Credits</text>
<text x="136.0" y="443.8" font-size="9.00" textLength="377.6" lengthAdjust="spacingAndGlyphs">If your total income will be $200,000 or less ($400,000 or less if married filing jointly):</text>
<text x="152.0" y="460.4" font-size="9.00" textLength="291.4" lengthAdjust="spacingAndGlyphs">Multiply the number of qualifying children under age 17 by $2,000</text>
<text x="452.0" y="461.0" font-size="8.60" textLength="4.6" lengthAdjust="spacingAndGlyphs">$</text>
<rect x="451.4" y="463.8" width="79.8" height="1.2" fill="#222"/>
<text x="152.0" y="481.8" font-size="9.00" textLength="222.4" lengthAdjust="spacingAndGlyphs">Multiply the number of other dependents by $500</text>
<rect x="440.0" y="480.4" width="1.2" height="1.2" fill="#333"/>
<rect x="430.8" y="480.4" width="1.2" height="1.2" fill="#333"/>
<rect x="421.6" y="480.4" width="1.2" height="1.2" fill="#333"/>
<rect x="412.4" y="480.4" width="1.2" height="1.2" fill="#333"/>
<rect x="403.2" y="480.4" width="1.2" height="1.2" fill="#333"/>
<rect x="394.0" y="480.4" width="1.2" height="1.2" fill="#333"/>
<text x="452.0" y="481.6" font-size="8.60" textLength="4.6" lengthAdjust="spacingAndGlyphs">$</text>
<rect x="451.4" y="483.0" width="79.8" height="1.2" fill="#222"/>
<text x="136.0" y="503.5" font-size="9.00" textLength="394.0" lengthAdjust="spacingAndGlyphs">Add the amounts above for qualifying children and other dependents. You may add to</text>
<text x="136.0" y="513.9" font-size="9.00" textLength="250.8" lengthAdjust="spacingAndGlyphs">this the amount of any other credits. Enter the total here</text>
<rect x="530.0" y="512.6" width="1.2" height="1.2" fill="#333"/>
<rect x="520.8" y="512.6" width="1.2" height="1.2" fill="#333"/>
<rect x="511.6" y="512.6" width="1.2" height="1.2" fill="#333"/>
<rect x="502.4" y="512.6" width="1.2" height="1.2" fill="#333"/>
<rect x="493.2" y="512.6" width="1.2" height="1.2" fill="#333"/>
<rect x="484.0" y="512.6" width="1.2" height="1.2" fill="#333"/>
<rect x="474.8" y="512.6" width="1.2" height="1.2" fill="#333"/>
<rect x="465.6" y="512.6" width="1.2" height="1.2" fill="#333"/>
<rect x="456.4" y="512.6" width="1.2" height="1.2" fill="#333"/>
<rect x="447.2" y="512.6" width="1.2" height="1.2" fill="#333"/>
<rect x="438.0" y="512.6" width="1.2" height="1.2" fill="#333"/>
<rect x="428.8" y="512.6" width="1.2" height="1.2" fill="#333"/>
<rect x="419.6" y="512.6" width="1.2" height="1.2" fill="#333"/>
<rect x="410.4" y="512.6" width="1.2" height="1.2" fill="#333"/>
<rect x="401.2" y="512.6" width="1.2" height="1.2" fill="#333"/>
<rect x="538.0" y="429.8" width="1.6" height="202.2" fill="#222"/>
<rect x="562.4" y="429.8" width="1.6" height="202.2" fill="#222"/>
<text x="551.2" y="513.4" font-size="8.60" font-weight="bold" text-anchor="middle">3</text>
<text x="566.6" y="513.4" font-size="8.60" textLength="4.4" lengthAdjust="spacingAndGlyphs">$</text>
<rect x="40.0" y="515.9" width="604.0" height="1.8" fill="#222"/>
<text x="40.0" y="530.9" font-size="11.00" font-weight="bold" textLength="34.0" lengthAdjust="spacingAndGlyphs">Step 4</text>
<text x="40.0" y="543.6" font-size="10.20" font-weight="bold" textLength="56.0" lengthAdjust="spacingAndGlyphs">(optional):</text>
<text x="40.0" y="560.4" font-size="10.20" font-weight="bold" textLength="29.0" lengthAdjust="spacingAndGlyphs">Other</text>
<text x="40.0" y="574.2" font-size="10.20" font-weight="bold" textLength="63.0" lengthAdjust="spacingAndGlyphs">Adjustments</text>
<text x="136.0" y="530.5" font-size="9.00" textLength="394.0" lengthAdjust="spacingAndGlyphs"><tspan font-weight="bold">(a) Other income (not from jobs).</tspan> If you want tax withheld for other income you</text>
<text x="152.0" y="542.4" font-size="9.00" textLength="378.0" lengthAdjust="spacingAndGlyphs">expect this year that won’t have withholding, enter the amount of other income here.</text>
<text x="152.0" y="555.8" font-size="9.00" textLength="268.0" lengthAdjust="spacingAndGlyphs">This may include interest, dividends, and retirement income</text>
<rect x="530.0" y="554.4" width="1.2" height="1.2" fill="#333"/>
<rect x="520.8" y="554.4" width="1.2" height="1.2" fill="#333"/>
<rect x="511.6" y="554.4" width="1.2" height="1.2" fill="#333"/>
<rect x="502.4" y="554.4" width="1.2" height="1.2" fill="#333"/>
<rect x="493.2" y="554.4" width="1.2" height="1.2" fill="#333"/>
<rect x="484.0" y="554.4" width="1.2" height="1.2" fill="#333"/>
<rect x="474.8" y="554.4" width="1.2" height="1.2" fill="#333"/>
<rect x="465.6" y="554.4" width="1.2" height="1.2" fill="#333"/>
<rect x="456.4" y="554.4" width="1.2" height="1.2" fill="#333"/>
<rect x="447.2" y="554.4" width="1.2" height="1.2" fill="#333"/>
<rect x="438.0" y="554.4" width="1.2" height="1.2" fill="#333"/>
<text x="542.6" y="555.3" font-size="8.40" font-weight="bold" textLength="18.0" lengthAdjust="spacingAndGlyphs">4(a)</text>
<text x="566.6" y="555.4" font-size="8.60" textLength="4.4" lengthAdjust="spacingAndGlyphs">$</text>
<rect x="538.8" y="556.0" width="105.2" height="1.6" fill="#222"/>
<text x="136.0" y="577.4" font-size="9.00" textLength="394.0" lengthAdjust="spacingAndGlyphs"><tspan font-weight="bold">(b) Deductions.</tspan> If you expect to claim deductions other than the standard deduction and</text>
<text x="152.0" y="589.1" font-size="9.00" textLength="378.0" lengthAdjust="spacingAndGlyphs">want to reduce your withholding, use the Deductions Worksheet on page 3 and enter</text>
<text x="152.0" y="602.9" font-size="9.00" textLength="66.0" lengthAdjust="spacingAndGlyphs">the result here</text>
<rect x="530.0" y="601.6" width="1.2" height="1.2" fill="#333"/>
<rect x="520.8" y="601.6" width="1.2" height="1.2" fill="#333"/>
<rect x="511.6" y="601.6" width="1.2" height="1.2" fill="#333"/>
<rect x="502.4" y="601.6" width="1.2" height="1.2" fill="#333"/>
<rect x="493.2" y="601.6" width="1.2" height="1.2" fill="#333"/>
<rect x="484.0" y="601.6" width="1.2" height="1.2" fill="#333"/>
<rect x="474.8" y="601.6" width="1.2" height="1.2" fill="#333"/>
<rect x="465.6" y="601.6" width="1.2" height="1.2" fill="#333"/>
<rect x="456.4" y="601.6" width="1.2" height="1.2" fill="#333"/>
<rect x="447.2" y="601.6" width="1.2" height="1.2" fill="#333"/>
<rect x="438.0" y="601.6" width="1.2" height="1.2" fill="#333"/>
<rect x="428.8" y="601.6" width="1.2" height="1.2" fill="#333"/>
<rect x="419.6" y="601.6" width="1.2" height="1.2" fill="#333"/>
<rect x="410.4" y="601.6" width="1.2" height="1.2" fill="#333"/>
<rect x="401.2" y="601.6" width="1.2" height="1.2" fill="#333"/>
<rect x="392.0" y="601.6" width="1.2" height="1.2" fill="#333"/>
<rect x="382.8" y="601.6" width="1.2" height="1.2" fill="#333"/>
<rect x="373.6" y="601.6" width="1.2" height="1.2" fill="#333"/>
<rect x="364.4" y="601.6" width="1.2" height="1.2" fill="#333"/>
<rect x="355.2" y="601.6" width="1.2" height="1.2" fill="#333"/>
<rect x="346.0" y="601.6" width="1.2" height="1.2" fill="#333"/>
<rect x="336.8" y="601.6" width="1.2" height="1.2" fill="#333"/>
<rect x="327.6" y="601.6" width="1.2" height="1.2" fill="#333"/>
<rect x="318.4" y="601.6" width="1.2" height="1.2" fill="#333"/>
<rect x="309.2" y="601.6" width="1.2" height="1.2" fill="#333"/>
<rect x="300.0" y="601.6" width="1.2" height="1.2" fill="#333"/>
<rect x="290.8" y="601.6" width="1.2" height="1.2" fill="#333"/>
<rect x="281.6" y="601.6" width="1.2" height="1.2" fill="#333"/>
<rect x="272.4" y="601.6" width="1.2" height="1.2" fill="#333"/>
<rect x="263.2" y="601.6" width="1.2" height="1.2" fill="#333"/>
<rect x="254.0" y="601.6" width="1.2" height="1.2" fill="#333"/>
<rect x="244.8" y="601.6" width="1.2" height="1.2" fill="#333"/>
<rect x="235.6" y="601.6" width="1.2" height="1.2" fill="#333"/>
<text x="542.6" y="602.1" font-size="8.40" font-weight="bold" textLength="18.0" lengthAdjust="spacingAndGlyphs">4(b)</text>
<text x="566.6" y="602.2" font-size="8.60" textLength="4.4" lengthAdjust="spacingAndGlyphs">$</text>
<rect x="538.8" y="604.4" width="105.2" height="1.6" fill="#222"/>
<text x="136.0" y="627.9" font-size="9.00" textLength="369.0" lengthAdjust="spacingAndGlyphs"><tspan font-weight="bold">(c) Extra withholding.</tspan> Enter any additional tax you want withheld each <tspan font-weight="bold">pay period</tspan></text>
<rect x="530.0" y="626.6" width="1.2" height="1.2" fill="#333"/>
<rect x="520.8" y="626.6" width="1.2" height="1.2" fill="#333"/>
<text x="542.6" y="627.5" font-size="8.40" font-weight="bold" textLength="18.0" lengthAdjust="spacingAndGlyphs">4(c)</text>
<text x="566.6" y="627.6" font-size="8.60" textLength="4.4" lengthAdjust="spacingAndGlyphs">$</text>
<rect x="538.8" y="630.8" width="105.2" height="1.6" fill="#222"/>
<rect x="40.0" y="657.7" width="604.0" height="1.8" fill="#222"/>
<text x="40.0" y="671.9" font-size="11.00" font-weight="bold" textLength="36.8" lengthAdjust="spacingAndGlyphs">Step 5:</text>
<text x="40.0" y="689.6" font-size="10.20" font-weight="bold" textLength="23.0" lengthAdjust="spacingAndGlyphs">Sign</text>
<text x="40.0" y="701.6" font-size="10.20" font-weight="bold" textLength="24.0" lengthAdjust="spacingAndGlyphs">Here</text>
<rect x="103.6" y="658.6" width="1.6" height="120.6" fill="#222"/>
<text x="108.0" y="671.1" font-size="7.00" textLength="503.6" lengthAdjust="spacingAndGlyphs">Under penalties of perjury, I declare that this certificate, to the best of my knowledge and belief, is true, correct, and complete.</text>
<rect x="113.0" y="704.3" width="385.8" height="1.4" fill="#222"/>
<rect x="515.0" y="704.3" width="129.0" height="1.4" fill="#222"/>
<text x="114.0" y="715.9" font-size="8.80" textLength="288.0" lengthAdjust="spacingAndGlyphs"><tspan font-weight="bold">Employee’s signature</tspan> (This form is not valid unless you sign it.)</text>
<text x="518.0" y="715.9" font-size="8.80" font-weight="bold" textLength="21.0" lengthAdjust="spacingAndGlyphs">Date</text>
<rect x="40.0" y="724.1" width="604.0" height="1.8" fill="#222"/>
<text x="40.0" y="739.1" font-size="10.60" font-weight="bold" textLength="55.2" lengthAdjust="spacingAndGlyphs">Employers</text>
<text x="40.0" y="752.7" font-size="10.60" font-weight="bold" textLength="25.0" lengthAdjust="spacingAndGlyphs">Only</text>
<text x="108.0" y="737.1" font-size="7.20" textLength="122.0" lengthAdjust="spacingAndGlyphs">Employer’s name and address</text>
<rect x="434.4" y="725.0" width="1.2" height="54.2" fill="#222"/>
<rect x="522.4" y="725.0" width="1.2" height="54.2" fill="#222"/>
<text x="440.0" y="737.1" font-size="7.20" textLength="48.0" lengthAdjust="spacingAndGlyphs">First date of</text>
<text x="440.0" y="746.9" font-size="7.20" textLength="49.0" lengthAdjust="spacingAndGlyphs">employment</text>
<text x="530.0" y="737.1" font-size="7.20" textLength="91.2" lengthAdjust="spacingAndGlyphs">Employer identification</text>
<text x="530.0" y="746.9" font-size="7.20" textLength="52.0" lengthAdjust="spacingAndGlyphs">number (EIN)</text>
<rect x="40.0" y="778.3" width="604.0" height="1.8" fill="#222"/>
<text x="40.0" y="790.7" font-size="7.60" font-weight="bold" textLength="279.2" lengthAdjust="spacingAndGlyphs">For Privacy Act and Paperwork Reduction Act Notice, see page 3.</text>
<text x="416.8" y="789.4" font-size="6.20" textLength="58.6" lengthAdjust="spacingAndGlyphs">Cat. No. 10220Q</text>
<text x="578.0" y="790.0" font-size="6.20" textLength="18.0" lengthAdjust="spacingAndGlyphs">Form</text>
<text x="598.0" y="790.3" font-size="11.20" font-weight="bold" textLength="22.6" lengthAdjust="spacingAndGlyphs">W-4</text>
<text x="623.0" y="790.0" font-size="6.20" textLength="21.0" lengthAdjust="spacingAndGlyphs">(2024)</text>
<rect x="103.6" y="547.4" width="296.4" height="111.4" fill="#fff" stroke="#222" stroke-width="1.4"/>
<rect x="412.8" y="633.6" width="106.6" height="34.4" fill="#fff" stroke="#222" stroke-width="1.4"/>
</svg>
 <span class="tl" style="left:112px;top:149.500px">1</span>
 <div class="abs thp" style="left:76px;top:182.500px;width:92.500px;height:120.500px"></div>
 <svg class="abs" style="left:76px;top:182.500px" width="92.500" height="120.500" viewBox="0 0 92.5 120.5"><rect x="5" y="4.5" width="82" height="0.6" fill="#666"/><rect x="5.0" y="7.0" width="39.0" height="0.75" fill="#9c9c9c"/><rect x="5.0" y="9.1" width="39.0" height="0.75" fill="#9c9c9c"/><rect x="5.0" y="12.5" width="30.4" height="0.75" fill="#9c9c9c"/><rect x="5.0" y="14.6" width="39.0" height="0.75" fill="#9c9c9c"/><rect x="5.0" y="16.6" width="39.0" height="0.75" fill="#9c9c9c"/><rect x="5.0" y="18.7" width="39.0" height="0.75" fill="#9c9c9c"/><rect x="5.0" y="20.7" width="31.1" height="0.75" fill="#9c9c9c"/><rect x="5.0" y="22.8" width="16.2" height="0.75" fill="#9c9c9c"/><rect x="5.0" y="24.8" width="39.0" height="0.75" fill="#9c9c9c"/><rect x="5.0" y="26.9" width="32.3" height="0.75" fill="#9c9c9c"/><rect x="5.0" y="30.4" width="39.0" height="0.75" fill="#9c9c9c"/><rect x="5.0" y="32.4" width="39.0" height="0.75" fill="#9c9c9c"/><rect x="5.0" y="34.5" width="39.0" height="0.75" fill="#9c9c9c"/><rect x="5.0" y="36.5" width="24.5" height="0.75" fill="#9c9c9c"/><rect x="5.0" y="38.6" width="25.1" height="0.75" fill="#9c9c9c"/><rect x="5.0" y="40.6" width="23.6" height="0.75" fill="#9c9c9c"/><rect x="5.0" y="42.7" width="39.0" height="0.75" fill="#9c9c9c"/><rect x="5.0" y="44.7" width="39.0" height="0.75" fill="#9c9c9c"/><rect x="5.0" y="46.8" width="12.7" height="0.75" fill="#9c9c9c"/><rect x="5.0" y="50.3" width="39.0" height="0.75" fill="#9c9c9c"/><rect x="5.0" y="52.3" width="39.0" height="0.75" fill="#9c9c9c"/><rect x="5.0" y="54.4" width="16.3" height="0.75" fill="#9c9c9c"/><rect x="5.0" y="56.4" width="39.0" height="0.75" fill="#9c9c9c"/><rect x="5.0" y="58.5" width="39.0" height="0.75" fill="#9c9c9c"/><rect x="5.0" y="60.5" width="39.0" height="0.75" fill="#9c9c9c"/><rect x="5.0" y="62.6" width="39.0" height="0.75" fill="#9c9c9c"/><rect x="5.0" y="64.6" width="39.0" height="0.75" fill="#9c9c9c"/><rect x="5.0" y="68.1" width="39.0" height="0.75" fill="#9c9c9c"/><rect x="5.0" y="70.1" width="39.0" height="0.75" fill="#9c9c9c"/><rect x="5.0" y="72.2" width="39.0" height="0.75" fill="#9c9c9c"/><rect x="5.0" y="74.2" width="39.0" height="0.75" fill="#9c9c9c"/><rect x="5.0" y="76.3" width="34.0" height="0.75" fill="#9c9c9c"/><rect x="5.0" y="78.3" width="12.1" height="0.75" fill="#9c9c9c"/><rect x="5.0" y="80.4" width="29.8" height="0.75" fill="#9c9c9c"/><rect x="5.0" y="82.4" width="26.2" height="0.75" fill="#9c9c9c"/><rect x="5.0" y="84.5" width="39.0" height="0.75" fill="#9c9c9c"/><rect x="5.0" y="86.5" width="39.0" height="0.75" fill="#9c9c9c"/><rect x="5.0" y="88.6" width="39.0" height="0.75" fill="#9c9c9c"/><rect x="5.0" y="90.6" width="39.0" height="0.75" fill="#9c9c9c"/><rect x="5.0" y="95.6" width="39.0" height="0.75" fill="#9c9c9c"/><rect x="5.0" y="97.6" width="39.0" height="0.75" fill="#9c9c9c"/><rect x="48.5" y="8.4" width="38.5" height="0.75" fill="#9c9c9c"/><rect x="48.5" y="10.5" width="38.5" height="0.75" fill="#9c9c9c"/><rect x="48.5" y="14.0" width="38.5" height="0.75" fill="#9c9c9c"/><rect x="48.5" y="16.0" width="38.5" height="0.75" fill="#9c9c9c"/><rect x="48.5" y="18.1" width="38.5" height="0.75" fill="#9c9c9c"/><rect x="48.5" y="20.1" width="38.5" height="0.75" fill="#9c9c9c"/><rect x="48.5" y="22.2" width="38.5" height="0.75" fill="#9c9c9c"/><rect x="48.5" y="24.2" width="22.6" height="0.75" fill="#9c9c9c"/><rect x="48.5" y="26.3" width="38.5" height="0.75" fill="#9c9c9c"/><rect x="48.5" y="29.8" width="38.5" height="0.75" fill="#9c9c9c"/><rect x="48.5" y="31.8" width="23.1" height="0.75" fill="#9c9c9c"/><rect x="48.5" y="35.3" width="38.5" height="0.75" fill="#9c9c9c"/><rect x="48.5" y="37.3" width="38.5" height="0.75" fill="#9c9c9c"/><rect x="48.5" y="39.4" width="38.5" height="0.75" fill="#9c9c9c"/><rect x="48.5" y="42.9" width="38.5" height="0.75" fill="#9c9c9c"/><rect x="48.5" y="44.9" width="38.5" height="0.75" fill="#9c9c9c"/><rect x="48.5" y="47.0" width="38.5" height="0.75" fill="#9c9c9c"/><rect x="48.5" y="49.0" width="38.5" height="0.75" fill="#9c9c9c"/><rect x="48.5" y="51.1" width="38.5" height="0.75" fill="#9c9c9c"/><rect x="48.5" y="53.1" width="32.3" height="0.75" fill="#9c9c9c"/><rect x="48.5" y="55.2" width="38.5" height="0.75" fill="#9c9c9c"/><rect x="48.5" y="57.2" width="38.5" height="0.75" fill="#9c9c9c"/><rect x="48.5" y="59.3" width="23.7" height="0.75" fill="#9c9c9c"/><rect x="48.5" y="61.3" width="38.5" height="0.75" fill="#9c9c9c"/><rect x="48.5" y="63.4" width="33.6" height="0.75" fill="#9c9c9c"/><rect x="48.5" y="66.9" width="27.0" height="0.75" fill="#9c9c9c"/><rect x="48.5" y="70.3" width="38.5" height="0.75" fill="#9c9c9c"/><rect x="48.5" y="72.4" width="38.5" height="0.75" fill="#9c9c9c"/><rect x="48.5" y="75.9" width="38.5" height="0.75" fill="#9c9c9c"/><rect x="48.5" y="77.9" width="38.5" height="0.75" fill="#9c9c9c"/><rect x="48.5" y="80.0" width="38.5" height="0.75" fill="#9c9c9c"/><rect x="48.5" y="83.5" width="38.5" height="0.75" fill="#9c9c9c"/><rect x="48.5" y="85.5" width="38.5" height="0.75" fill="#9c9c9c"/><rect x="48.5" y="87.6" width="38.5" height="0.75" fill="#9c9c9c"/><rect x="48.5" y="89.6" width="38.5" height="0.75" fill="#9c9c9c"/><rect x="48.5" y="91.7" width="38.5" height="0.75" fill="#9c9c9c"/><rect x="48.5" y="93.7" width="38.5" height="0.75" fill="#9c9c9c"/><rect x="48.5" y="95.8" width="38.5" height="0.75" fill="#9c9c9c"/><rect x="48.5" y="97.8" width="38.5" height="0.75" fill="#9c9c9c"/><rect x="48.5" y="102.7" width="38.5" height="0.75" fill="#9c9c9c"/><rect x="48.5" y="104.8" width="38.5" height="0.75" fill="#9c9c9c"/><rect x="48.5" y="106.8" width="38.5" height="0.75" fill="#9c9c9c"/><rect x="48.5" y="108.9" width="38.5" height="0.75" fill="#9c9c9c"/><rect x="48.5" y="44" width="3.500" height="3.500" fill="none" stroke="#555" stroke-width="0.6"/></svg>
 <span class="tl" style="left:112px;top:311.500px">2</span>
 <div class="abs thp" style="left:76px;top:345px;width:92.500px;height:80px"></div>
 <svg class="abs" style="left:76px;top:345px" width="92.500" height="80" viewBox="0 0 92.5 80"><rect x="5" y="6.500" width="82" height="4" fill="#ddd" stroke="#777" stroke-width="0.5"/><rect x="5.0" y="13.0" width="28.8" height="0.75" fill="#9c9c9c"/><rect x="5.0" y="15.2" width="82.0" height="0.75" fill="#9c9c9c"/><rect x="5.0" y="17.4" width="82.0" height="0.75" fill="#9c9c9c"/><rect x="5.0" y="19.6" width="82.0" height="0.75" fill="#9c9c9c"/><rect x="5.0" y="21.8" width="82.0" height="0.75" fill="#9c9c9c"/><rect x="9.0" y="26.8" width="38.3" height="0.75" fill="#9c9c9c"/><rect x="9.0" y="29.4" width="48.3" height="0.75" fill="#9c9c9c"/><rect x="9.0" y="33.8" width="63.0" height="0.75" fill="#9c9c9c"/><rect x="9.0" y="36.4" width="34.9" height="0.75" fill="#9c9c9c"/><rect x="9.0" y="39.0" width="63.0" height="0.75" fill="#9c9c9c"/><rect x="9.0" y="41.6" width="63.0" height="0.75" fill="#9c9c9c"/><rect x="9.0" y="44.2" width="63.0" height="0.75" fill="#9c9c9c"/><rect x="9.0" y="46.8" width="63.0" height="0.75" fill="#9c9c9c"/><rect x="9.0" y="49.4" width="63.0" height="0.75" fill="#9c9c9c"/><rect x="9.0" y="53.9" width="63.0" height="0.75" fill="#9c9c9c"/><rect x="9.0" y="56.5" width="63.0" height="0.75" fill="#9c9c9c"/><rect x="9.0" y="59.1" width="63.0" height="0.75" fill="#9c9c9c"/><rect x="9.0" y="61.7" width="32.4" height="0.75" fill="#9c9c9c"/><rect x="9.0" y="64.3" width="42.6" height="0.75" fill="#9c9c9c"/><rect x="9.0" y="66.9" width="63.0" height="0.75" fill="#9c9c9c"/><rect x="9.0" y="69.5" width="36.6" height="0.75" fill="#9c9c9c"/><rect x="9.0" y="72.1" width="63.0" height="0.75" fill="#9c9c9c"/><rect x="9.0" y="74.7" width="63.0" height="0.75" fill="#9c9c9c"/><rect x="9.0" y="77.3" width="63.0" height="0.75" fill="#9c9c9c"/><rect x="9.0" y="79.9" width="63.0" height="0.75" fill="#9c9c9c"/><rect x="74" y="31.0" width="12" height="0.6" fill="#555"/><rect x="74" y="43.0" width="12" height="0.6" fill="#555"/><rect x="74" y="49.0" width="12" height="0.6" fill="#555"/><rect x="74" y="52.0" width="12" height="0.6" fill="#555"/><rect x="74" y="57.0" width="12" height="0.6" fill="#555"/><rect x="74" y="62.0" width="12" height="0.6" fill="#555"/><rect x="74" y="66.0" width="12" height="0.6" fill="#555"/></svg>
</div>
<!-- thumbs scrollbar -->
<div class="abs" style="left:244px;top:48px;width:13.500px;height:413px;background:#fbfbfb"></div>
<div class="abs" style="left:247px;top:64px;width:6.500px;height:302px;border-radius:3px;background:#9a9a9a"></div>
<svg class="abs" style="left:246px;top:53px" width="9" height="5" viewBox="0 0 9 5"><path fill="#8a8a8a" d="M0 5L4.500 0 9 5z"/></svg>
<!-- page area -->
<div class="abs" style="left:257.500px;top:47px;width:346.500px;height:414px;background:#202124"></div>
<div id="page" class="abs"><!--FORM_S--><svg class="abs" style="left:0;top:0" width="342" height="412" viewBox="0 0 684 824" font-family="Liberation Sans, sans-serif" fill="#111" xml:space="preserve">
<rect x="106.0" y="104.0" width="198.0" height="17.6" fill="#f0f1fb"/>
<rect x="307.0" y="104.0" width="224.0" height="17.6" fill="#f0f1fb"/>
<rect x="534.0" y="104.0" width="110.0" height="17.6" fill="#f0f1fb"/>
<rect x="106.0" y="132.0" width="425.0" height="16.6" fill="#f0f1fb"/>
<rect x="106.0" y="158.0" width="425.0" height="16.0" fill="#f0f1fb"/>
<rect x="452.0" y="453.0" width="79.2" height="11.0" fill="#f0f1fb"/>
<rect x="452.0" y="472.0" width="79.2" height="11.0" fill="#f0f1fb"/>
<rect x="565.0" y="503.0" width="79.0" height="13.0" fill="#f0f1fb"/>
<rect x="565.0" y="544.6" width="79.0" height="11.4" fill="#f0f1fb"/>
<rect x="565.0" y="593.0" width="79.0" height="11.6" fill="#f0f1fb"/>
<rect x="565.0" y="618.0" width="79.0" height="12.8" fill="#f0f1fb"/>
<rect x="106.0" y="743.0" width="328.0" height="35.0" fill="#f0f1fb"/>
<rect x="436.6" y="764.0" width="85.4" height="14.0" fill="#f0f1fb"/>
<rect x="524.6" y="764.0" width="119.4" height="14.0" fill="#f0f1fb"/>
<text x="40.0" y="59.5" font-size="6.60" textLength="17.0" lengthAdjust="spacingAndGlyphs">Form</text>
<text x="62.6" y="61.8" font-size="28.00" font-weight="bold" textLength="44.0" lengthAdjust="spacingAndGlyphs" stroke="#111" stroke-width="0.5">W-4</text>
<text x="40.0" y="82.0" font-size="6.80" textLength="86.0" lengthAdjust="spacingAndGlyphs">Department of the Treasury</text>
<text x="40.0" y="90.0" font-size="6.80" textLength="79.0" lengthAdjust="spacingAndGlyphs">Internal Revenue Service</text>
<rect x="128.4" y="40.6" width="1.6" height="54.4" fill="#222"/>
<text x="218.0" y="51.3" font-size="15.80" font-weight="bold" textLength="246.6" lengthAdjust="spacingAndGlyphs">Employee’s Withholding Certificate</text>
<text x="136.0" y="66.0" font-size="8.60" font-weight="bold" textLength="411.4" lengthAdjust="spacingAndGlyphs">Complete Form W-4 so that your employer can withhold the correct federal income tax from your pay.</text>
<text x="271.6" y="78.0" font-size="8.60" font-weight="bold" textLength="139.6" lengthAdjust="spacingAndGlyphs">Give Form W-4 to your employer.</text>
<text x="238.8" y="90.0" font-size="8.60" font-weight="bold" textLength="204.2" lengthAdjust="spacingAndGlyphs">Your withholding is subject to review by the IRS.</text>
<rect x="554.2" y="40.6" width="1.6" height="54.4" fill="#222"/>
<text x="563.0" y="50.2" font-size="6.80" textLength="73.0" lengthAdjust="spacingAndGlyphs">OMB No. 1545-0074</text>
<rect x="555.0" y="53.9" width="89.0" height="1.4" fill="#222"/>
<text x="570.6" y="82.1" font-size="22.00" font-weight="bold" fill="#e4e4e4" textLength="27.4" lengthAdjust="spacingAndGlyphs" stroke="#8a8a8a" stroke-width="0.8">20</text>
<text x="598.6" y="82.1" font-size="22.00" font-weight="bold" textLength="29.4" lengthAdjust="spacingAndGlyphs">24</text>
<rect x="40.0" y="94.0" width="604.0" height="2.0" fill="#222"/>
<text x="40.0" y="109.9" font-size="11.00" font-weight="bold" textLength="36.8" lengthAdjust="spacingAndGlyphs">Step 1:</text>
<text x="40.0" y="126.2" font-size="10.20" font-weight="bold" textLength="28.0" lengthAdjust="spacingAndGlyphs">Enter</text>
<text x="40.0" y="138.2" font-size="10.20" font-weight="bold" textLength="45.0" lengthAdjust="spacingAndGlyphs">Personal</text>
<text x="40.0" y="150.4" font-size="10.20" font-weight="bold" textLength="59.2" lengthAdjust="spacingAndGlyphs">Information</text>
<rect x="103.2" y="95.0" width="1.6" height="120.4" fill="#222"/>
<text x="109.0" y="102.2" font-size="6.40" font-weight="bold" textLength="8.0" lengthAdjust="spacingAndGlyphs">(a)</text>
<text x="123.4" y="102.3" font-size="6.60" textLength="98.2" lengthAdjust="spacingAndGlyphs">First name and middle initial</text>
<rect x="304.8" y="95.0" width="1.2" height="27.6" fill="#222"/>
<text x="310.0" y="102.3" font-size="6.60" textLength="36.0" lengthAdjust="spacingAndGlyphs">Last name</text>
<rect x="104.0" y="121.7" width="428.0" height="1.8" fill="#444"/>
<text x="109.0" y="130.1" font-size="6.60" textLength="28.0" lengthAdjust="spacingAndGlyphs">Address</text>
<rect x="104.0" y="148.9" width="428.0" height="1.4" fill="#222"/>
<text x="109.0" y="155.9" font-size="6.60" textLength="114.4" lengthAdjust="spacingAndGlyphs">City or town, state, and ZIP code</text>
<rect x="104.0" y="174.2" width="540.0" height="1.6" fill="#222"/>
<rect x="531.2" y="95.0" width="1.6" height="80.0" fill="#222"/>
<text x="537.0" y="102.2" font-size="6.40" font-weight="bold" textLength="8.0" lengthAdjust="spacingAndGlyphs">(b)</text>
<text x="551.6" y="102.4" font-size="7.00" font-weight="bold" textLength="84.4" lengthAdjust="spacingAndGlyphs">Social security number</text>
<rect x="532.0" y="121.6" width="112.0" height="2.4" fill="#222"/>
<text x="537.0" y="130.2" font-size="7.00" font-weight="bold" textLength="99.0" lengthAdjust="spacingAndGlyphs">Does your name match the</text>
<text x="537.0" y="138.2" font-size="7.00" font-weight="bold" textLength="104.0" lengthAdjust="spacingAndGlyphs">name on your social security</text>
<text x="537.0" y="146.4" font-size="6.80" textLength="104.0" lengthAdjust="spacingAndGlyphs"><tspan font-weight="bold">card?</tspan> If not, to ensure you get</text>
<text x="537.0" y="155.2" font-size="6.80" textLength="85.0" lengthAdjust="spacingAndGlyphs">credit for your earnings,</text>
<text x="537.0" y="163.6" font-size="6.80" textLength="103.0" lengthAdjust="spacingAndGlyphs">contact SSA at 800-772-1213</text>
<text x="537.0" y="171.8" font-size="6.80" textLength="81.0" lengthAdjust="spacingAndGlyphs">or go to <tspan font-style="italic">www.ssa.gov</tspan>.</text>
<text x="109.0" y="184.2" font-size="6.40" font-weight="bold" textLength="8.0" lengthAdjust="spacingAndGlyphs">(c)</text>
<rect x="128.0" y="177.2" width="8.6" height="9.2" fill="#fff" stroke="#777" stroke-width="0.7"/>
<rect x="128.0" y="190.4" width="8.6" height="9.2" fill="#fff" stroke="#777" stroke-width="0.7"/>
<rect x="128.0" y="203.2" width="8.6" height="9.2" fill="#fff" stroke="#777" stroke-width="0.7"/>
<text x="140.6" y="184.5" font-size="7.00" textLength="124.2" lengthAdjust="spacingAndGlyphs"><tspan font-weight="bold">Single</tspan> or <tspan font-weight="bold">Married filing separately</tspan></text>
<text x="140.6" y="197.7" font-size="7.00" textLength="187.4" lengthAdjust="spacingAndGlyphs"><tspan font-weight="bold">Married filing jointly</tspan> or <tspan font-weight="bold">Qualifying surviving spouse</tspan></text>
<text x="140.6" y="210.3" font-size="6.60" textLength="503.4" lengthAdjust="spacingAndGlyphs"><tspan font-weight="bold">Head of household</tspan> (Check only if you’re unmarried and pay more than half the costs of keeping up a home for yourself and a qualifying individual.)</text>
<rect x="40.0" y="214.5" width="604.0" height="1.8" fill="#222"/>
<text x="40.0" y="233.1" font-size="9.00" textLength="600.0" lengthAdjust="spacingAndGlyphs"><tspan font-weight="bold">Complete Steps 2–4 ONLY if they apply to you; otherwise, skip to Step 5.</tspan> See page 2 for more information on each step, who can</text>
<text x="40.0" y="243.9" font-size="9.00" textLength="401.2" lengthAdjust="spacingAndGlyphs">claim exemption from withholding, and when to use the estimator at <tspan font-style="italic">www.irs.gov/W4App</tspan>.</text>
<rect x="40.0" y="254.0" width="604.0" height="1.6" fill="#222"/>
<text x="40.0" y="268.9" font-size="11.00" font-weight="bold" textLength="36.8" lengthAdjust="spacingAndGlyphs">Step 2:</text>
<text x="40.0" y="284.8" font-size="10.20" font-weight="bold" textLength="71.0" lengthAdjust="spacingAndGlyphs">Multiple Jobs</text>
<text x="40.0" y="298.4" font-size="10.20" font-weight="bold" textLength="53.0" lengthAdjust="spacingAndGlyphs">or Spouse</text>
<text x="40.0" y="311.0" font-size="10.20" font-weight="bold" textLength="33.0" lengthAdjust="spacingAndGlyphs">Works</text>
<text x="136.0" y="269.9" font-size="9.00" textLength="488.4" lengthAdjust="spacingAndGlyphs">Complete this step if you (1) hold more than one job at a time, or (2) are married filing jointly and your spouse</text>
<text x="136.0" y="281.1" font-size="9.00" textLength="432.4" lengthAdjust="spacingAndGlyphs">also works. The correct amount of withholding depends on income earned from all of these jobs.</text>
<text x="136.0" y="298.5" font-size="9.00" textLength="128.8" lengthAdjust="spacingAndGlyphs">Do <tspan font-weight="bold">only one</tspan> of the following.</text>
<text x="136.0" y="312.0" font-size="8.60" font-weight="bold" textLength="12.0" lengthAdjust="spacingAndGlyphs">(a)</text>
<text x="152.0" y="312.1" font-size="9.00" textLength="482.6" lengthAdjust="spacingAndGlyphs">Use the estimator at <tspan font-style="italic">www.irs.gov/W4App</tspan> for most accurate withholding for this step (and Steps 3–4). If you</text>
<text x="152.0" y="324.5" font-size="9.00" textLength="292.0" lengthAdjust="spacingAndGlyphs">or your spouse have self-employment income, use this option; <tspan font-weight="bold">or</tspan></text>
<text x="136.0" y="341.0" font-size="8.60" font-weight="bold" textLength="12.0" lengthAdjust="spacingAndGlyphs">(b)</text>
<text x="152.0" y="341.1" font-size="9.00" textLength="386.4" lengthAdjust="spacingAndGlyphs">Use the Multiple Jobs Worksheet on page 3 and enter the result in Step 4(c) below; <tspan font-weight="bold">or</tspan></text>
<text x="136.0" y="356.0" font-size="8.60" font-weight="bold" textLength="12.0" lengthAdjust="spacingAndGlyphs">(c)</text>
<text x="152.0" y="356.1" font-size="9.00" textLength="470.0" lengthAdjust="spacingAndGlyphs">If there are only two jobs total, you may check this box. Do the same on Form W-4 for the other job. This</text>
<text x="152.0" y="367.1" font-size="9.00" textLength="472.0" lengthAdjust="spacingAndGlyphs">option is generally more accurate than (b) if pay at the lower paying job is more than half of the pay at the</text>
<text x="152.0" y="379.8" font-size="9.00" textLength="223.2" lengthAdjust="spacingAndGlyphs">higher paying job. Otherwise, (b) is more accurate</text>
<rect x="621.2" y="378.4" width="1.2" height="1.2" fill="#333"/>
<rect x="612.0" y="378.4" width="1.2" height="1.2" fill="#333"/>
<rect x="602.8" y="378.4" width="1.2" height="1.2" fill="#333"/>
<rect x="593.6" y="378.4" width="1.2" height="1.2" fill="#333"/>
<rect x="584.4" y="378.4" width="1.2" height="1.2" fill="#333"/>
<rect x="575.2" y="378.4" width="1.2" height="1.2" fill="#333"/>
<rect x="566.0" y="378.4" width="1.2" height="1.2" fill="#333"/>
<rect x="556.8" y="378.4" width="1.2" height="1.2" fill="#333"/>
<rect x="547.6" y="378.4" width="1.2" height="1.2" fill="#333"/>
<rect x="538.4" y="378.4" width="1.2" height="1.2" fill="#333"/>
<rect x="529.2" y="378.4" width="1.2" height="1.2" fill="#333"/>
<rect x="520.0" y="378.4" width="1.2" height="1.2" fill="#333"/>
<rect x="510.8" y="378.4" width="1.2" height="1.2" fill="#333"/>
<rect x="501.6" y="378.4" width="1.2" height="1.2" fill="#333"/>
<rect x="492.4" y="378.4" width="1.2" height="1.2" fill="#333"/>
<rect x="483.2" y="378.4" width="1.2" height="1.2" fill="#333"/>
<rect x="474.0" y="378.4" width="1.2" height="1.2" fill="#333"/>
<rect x="464.8" y="378.4" width="1.2" height="1.2" fill="#333"/>
<rect x="455.6" y="378.4" width="1.2" height="1.2" fill="#333"/>
<rect x="446.4" y="378.4" width="1.2" height="1.2" fill="#333"/>
<rect x="437.2" y="378.4" width="1.2" height="1.2" fill="#333"/>
<rect x="428.0" y="378.4" width="1.2" height="1.2" fill="#333"/>
<rect x="418.8" y="378.4" width="1.2" height="1.2" fill="#333"/>
<rect x="409.6" y="378.4" width="1.2" height="1.2" fill="#333"/>
<rect x="400.4" y="378.4" width="1.2" height="1.2" fill="#333"/>
<rect x="391.2" y="378.4" width="1.2" height="1.2" fill="#333"/>
<rect x="630.6" y="371.6" width="10.0" height="10.0" fill="#fff" stroke="#666" stroke-width="0.8"/>
<text x="40.0" y="407.1" font-size="9.00" textLength="596.8" lengthAdjust="spacingAndGlyphs"><tspan font-weight="bold">Complete Steps 3–4(b) on Form W-4 for only ONE of these jobs.</tspan> Leave those steps blank for the other jobs. (Your withholding will</text>
<text x="40.0" y="418.5" font-size="9.00" textLength="410.4" lengthAdjust="spacingAndGlyphs">be most accurate if you complete Steps 3–4(b) on the Form W-4 for the highest paying job.)</text>
<rect x="40.0" y="428.5" width="604.0" height="2.6" fill="#333"/>
<text x="40.0" y="444.5" font-size="11.00" font-weight="bold" textLength="36.8" lengthAdjust="spacingAndGlyphs">Step 3:</text>
<text x="40.0" y="460.4" font-size="10.20" font-weight="bold" textLength="30.0" lengthAdjust="spacingAndGlyphs">Claim</text>
<text x="40.0" y="472.6" font-size="10.20" font-weight="bold" textLength="58.0" lengthAdjust="spacingAndGlyphs">Dependent</text>
<text x="40.0" y="486.0" font-size="10.20" font-weight="bold" textLength="52.0" lengthAdjust="spacingAndGlyphs">and Other</text>
<text x="40.0" y="499.0" font-size="10.20" font-weight="bold" textLength="38.0" lengthAdjust="spacingAndGlyphs">Credits</text>
<text x="136.0" y="443.8" font-size="9.00" textLength="377.6" lengthAdjust="spacingAndGlyphs">If your total income will be $200,000 or less ($400,000 or less if married filing jointly):</text>
<text x="152.0" y="460.4" font-size="9.00" textLength="291.4" lengthAdjust="spacingAndGlyphs">Multiply the number of qualifying children under age 17 by $2,000</text>
<text x="452.0" y="461.0" font-size="8.60" textLength="4.6" lengthAdjust="spacingAndGlyphs">$</text>
<rect x="451.4" y="463.8" width="79.8" height="1.2" fill="#222"/>
<text x="152.0" y="481.8" font-size="9.00" textLength="222.4" lengthAdjust="spacingAndGlyphs">Multiply the number of other dependents by $500</text>
<rect x="440.0" y="480.4" width="1.2" height="1.2" fill="#333"/>
<rect x="430.8" y="480.4" width="1.2" height="1.2" fill="#333"/>
<rect x="421.6" y="480.4" width="1.2" height="1.2" fill="#333"/>
<rect x="412.4" y="480.4" width="1.2" height="1.2" fill="#333"/>
<rect x="403.2" y="480.4" width="1.2" height="1.2" fill="#333"/>
<rect x="394.0" y="480.4" width="1.2" height="1.2" fill="#333"/>
<text x="452.0" y="481.6" font-size="8.60" textLength="4.6" lengthAdjust="spacingAndGlyphs">$</text>
<rect x="451.4" y="483.0" width="79.8" height="1.2" fill="#222"/>
<text x="136.0" y="503.5" font-size="9.00" textLength="394.0" lengthAdjust="spacingAndGlyphs">Add the amounts above for qualifying children and other dependents. You may add to</text>
<text x="136.0" y="513.9" font-size="9.00" textLength="250.8" lengthAdjust="spacingAndGlyphs">this the amount of any other credits. Enter the total here</text>
<rect x="530.0" y="512.6" width="1.2" height="1.2" fill="#333"/>
<rect x="520.8" y="512.6" width="1.2" height="1.2" fill="#333"/>
<rect x="511.6" y="512.6" width="1.2" height="1.2" fill="#333"/>
<rect x="502.4" y="512.6" width="1.2" height="1.2" fill="#333"/>
<rect x="493.2" y="512.6" width="1.2" height="1.2" fill="#333"/>
<rect x="484.0" y="512.6" width="1.2" height="1.2" fill="#333"/>
<rect x="474.8" y="512.6" width="1.2" height="1.2" fill="#333"/>
<rect x="465.6" y="512.6" width="1.2" height="1.2" fill="#333"/>
<rect x="456.4" y="512.6" width="1.2" height="1.2" fill="#333"/>
<rect x="447.2" y="512.6" width="1.2" height="1.2" fill="#333"/>
<rect x="438.0" y="512.6" width="1.2" height="1.2" fill="#333"/>
<rect x="428.8" y="512.6" width="1.2" height="1.2" fill="#333"/>
<rect x="419.6" y="512.6" width="1.2" height="1.2" fill="#333"/>
<rect x="410.4" y="512.6" width="1.2" height="1.2" fill="#333"/>
<rect x="401.2" y="512.6" width="1.2" height="1.2" fill="#333"/>
<rect x="538.0" y="429.8" width="1.6" height="202.2" fill="#222"/>
<rect x="562.4" y="429.8" width="1.6" height="202.2" fill="#222"/>
<text x="551.2" y="513.4" font-size="8.60" font-weight="bold" text-anchor="middle">3</text>
<text x="566.6" y="513.4" font-size="8.60" textLength="4.4" lengthAdjust="spacingAndGlyphs">$</text>
<rect x="40.0" y="515.9" width="604.0" height="1.8" fill="#222"/>
<text x="40.0" y="530.9" font-size="11.00" font-weight="bold" textLength="34.0" lengthAdjust="spacingAndGlyphs">Step 4</text>
<text x="40.0" y="543.6" font-size="10.20" font-weight="bold" textLength="56.0" lengthAdjust="spacingAndGlyphs">(optional):</text>
<text x="40.0" y="560.4" font-size="10.20" font-weight="bold" textLength="29.0" lengthAdjust="spacingAndGlyphs">Other</text>
<text x="40.0" y="574.2" font-size="10.20" font-weight="bold" textLength="63.0" lengthAdjust="spacingAndGlyphs">Adjustments</text>
<text x="136.0" y="530.5" font-size="9.00" textLength="394.0" lengthAdjust="spacingAndGlyphs"><tspan font-weight="bold">(a) Other income (not from jobs).</tspan> If you want tax withheld for other income you</text>
<text x="152.0" y="542.4" font-size="9.00" textLength="378.0" lengthAdjust="spacingAndGlyphs">expect this year that won’t have withholding, enter the amount of other income here.</text>
<text x="152.0" y="555.8" font-size="9.00" textLength="268.0" lengthAdjust="spacingAndGlyphs">This may include interest, dividends, and retirement income</text>
<rect x="530.0" y="554.4" width="1.2" height="1.2" fill="#333"/>
<rect x="520.8" y="554.4" width="1.2" height="1.2" fill="#333"/>
<rect x="511.6" y="554.4" width="1.2" height="1.2" fill="#333"/>
<rect x="502.4" y="554.4" width="1.2" height="1.2" fill="#333"/>
<rect x="493.2" y="554.4" width="1.2" height="1.2" fill="#333"/>
<rect x="484.0" y="554.4" width="1.2" height="1.2" fill="#333"/>
<rect x="474.8" y="554.4" width="1.2" height="1.2" fill="#333"/>
<rect x="465.6" y="554.4" width="1.2" height="1.2" fill="#333"/>
<rect x="456.4" y="554.4" width="1.2" height="1.2" fill="#333"/>
<rect x="447.2" y="554.4" width="1.2" height="1.2" fill="#333"/>
<rect x="438.0" y="554.4" width="1.2" height="1.2" fill="#333"/>
<text x="542.6" y="555.3" font-size="8.40" font-weight="bold" textLength="18.0" lengthAdjust="spacingAndGlyphs">4(a)</text>
<text x="566.6" y="555.4" font-size="8.60" textLength="4.4" lengthAdjust="spacingAndGlyphs">$</text>
<rect x="538.8" y="556.0" width="105.2" height="1.6" fill="#222"/>
<text x="136.0" y="577.4" font-size="9.00" textLength="394.0" lengthAdjust="spacingAndGlyphs"><tspan font-weight="bold">(b) Deductions.</tspan> If you expect to claim deductions other than the standard deduction and</text>
<text x="152.0" y="589.1" font-size="9.00" textLength="378.0" lengthAdjust="spacingAndGlyphs">want to reduce your withholding, use the Deductions Worksheet on page 3 and enter</text>
<text x="152.0" y="602.9" font-size="9.00" textLength="66.0" lengthAdjust="spacingAndGlyphs">the result here</text>
<rect x="530.0" y="601.6" width="1.2" height="1.2" fill="#333"/>
<rect x="520.8" y="601.6" width="1.2" height="1.2" fill="#333"/>
<rect x="511.6" y="601.6" width="1.2" height="1.2" fill="#333"/>
<rect x="502.4" y="601.6" width="1.2" height="1.2" fill="#333"/>
<rect x="493.2" y="601.6" width="1.2" height="1.2" fill="#333"/>
<rect x="484.0" y="601.6" width="1.2" height="1.2" fill="#333"/>
<rect x="474.8" y="601.6" width="1.2" height="1.2" fill="#333"/>
<rect x="465.6" y="601.6" width="1.2" height="1.2" fill="#333"/>
<rect x="456.4" y="601.6" width="1.2" height="1.2" fill="#333"/>
<rect x="447.2" y="601.6" width="1.2" height="1.2" fill="#333"/>
<rect x="438.0" y="601.6" width="1.2" height="1.2" fill="#333"/>
<rect x="428.8" y="601.6" width="1.2" height="1.2" fill="#333"/>
<rect x="419.6" y="601.6" width="1.2" height="1.2" fill="#333"/>
<rect x="410.4" y="601.6" width="1.2" height="1.2" fill="#333"/>
<rect x="401.2" y="601.6" width="1.2" height="1.2" fill="#333"/>
<rect x="392.0" y="601.6" width="1.2" height="1.2" fill="#333"/>
<rect x="382.8" y="601.6" width="1.2" height="1.2" fill="#333"/>
<rect x="373.6" y="601.6" width="1.2" height="1.2" fill="#333"/>
<rect x="364.4" y="601.6" width="1.2" height="1.2" fill="#333"/>
<rect x="355.2" y="601.6" width="1.2" height="1.2" fill="#333"/>
<rect x="346.0" y="601.6" width="1.2" height="1.2" fill="#333"/>
<rect x="336.8" y="601.6" width="1.2" height="1.2" fill="#333"/>
<rect x="327.6" y="601.6" width="1.2" height="1.2" fill="#333"/>
<rect x="318.4" y="601.6" width="1.2" height="1.2" fill="#333"/>
<rect x="309.2" y="601.6" width="1.2" height="1.2" fill="#333"/>
<rect x="300.0" y="601.6" width="1.2" height="1.2" fill="#333"/>
<rect x="290.8" y="601.6" width="1.2" height="1.2" fill="#333"/>
<rect x="281.6" y="601.6" width="1.2" height="1.2" fill="#333"/>
<rect x="272.4" y="601.6" width="1.2" height="1.2" fill="#333"/>
<rect x="263.2" y="601.6" width="1.2" height="1.2" fill="#333"/>
<rect x="254.0" y="601.6" width="1.2" height="1.2" fill="#333"/>
<rect x="244.8" y="601.6" width="1.2" height="1.2" fill="#333"/>
<rect x="235.6" y="601.6" width="1.2" height="1.2" fill="#333"/>
<text x="542.6" y="602.1" font-size="8.40" font-weight="bold" textLength="18.0" lengthAdjust="spacingAndGlyphs">4(b)</text>
<text x="566.6" y="602.2" font-size="8.60" textLength="4.4" lengthAdjust="spacingAndGlyphs">$</text>
<rect x="538.8" y="604.4" width="105.2" height="1.6" fill="#222"/>
<text x="136.0" y="627.9" font-size="9.00" textLength="369.0" lengthAdjust="spacingAndGlyphs"><tspan font-weight="bold">(c) Extra withholding.</tspan> Enter any additional tax you want withheld each <tspan font-weight="bold">pay period</tspan></text>
<rect x="530.0" y="626.6" width="1.2" height="1.2" fill="#333"/>
<rect x="520.8" y="626.6" width="1.2" height="1.2" fill="#333"/>
<text x="542.6" y="627.5" font-size="8.40" font-weight="bold" textLength="18.0" lengthAdjust="spacingAndGlyphs">4(c)</text>
<text x="566.6" y="627.6" font-size="8.60" textLength="4.4" lengthAdjust="spacingAndGlyphs">$</text>
<rect x="538.8" y="630.8" width="105.2" height="1.6" fill="#222"/>
<rect x="40.0" y="657.7" width="604.0" height="1.8" fill="#222"/>
<text x="40.0" y="671.9" font-size="11.00" font-weight="bold" textLength="36.8" lengthAdjust="spacingAndGlyphs">Step 5:</text>
<text x="40.0" y="689.6" font-size="10.20" font-weight="bold" textLength="23.0" lengthAdjust="spacingAndGlyphs">Sign</text>
<text x="40.0" y="701.6" font-size="10.20" font-weight="bold" textLength="24.0" lengthAdjust="spacingAndGlyphs">Here</text>
<rect x="103.6" y="658.6" width="1.6" height="120.6" fill="#222"/>
<text x="108.0" y="671.1" font-size="7.00" textLength="503.6" lengthAdjust="spacingAndGlyphs">Under penalties of perjury, I declare that this certificate, to the best of my knowledge and belief, is true, correct, and complete.</text>
<rect x="113.0" y="704.3" width="385.8" height="1.4" fill="#222"/>
<rect x="515.0" y="704.3" width="129.0" height="1.4" fill="#222"/>
<text x="114.0" y="715.9" font-size="8.80" textLength="288.0" lengthAdjust="spacingAndGlyphs"><tspan font-weight="bold">Employee’s signature</tspan> (This form is not valid unless you sign it.)</text>
<text x="518.0" y="715.9" font-size="8.80" font-weight="bold" textLength="21.0" lengthAdjust="spacingAndGlyphs">Date</text>
<rect x="40.0" y="724.1" width="604.0" height="1.8" fill="#222"/>
<text x="40.0" y="739.1" font-size="10.60" font-weight="bold" textLength="55.2" lengthAdjust="spacingAndGlyphs">Employers</text>
<text x="40.0" y="752.7" font-size="10.60" font-weight="bold" textLength="25.0" lengthAdjust="spacingAndGlyphs">Only</text>
<text x="108.0" y="737.1" font-size="7.20" textLength="122.0" lengthAdjust="spacingAndGlyphs">Employer’s name and address</text>
<rect x="434.4" y="725.0" width="1.2" height="54.2" fill="#222"/>
<rect x="522.4" y="725.0" width="1.2" height="54.2" fill="#222"/>
<text x="440.0" y="737.1" font-size="7.20" textLength="48.0" lengthAdjust="spacingAndGlyphs">First date of</text>
<text x="440.0" y="746.9" font-size="7.20" textLength="49.0" lengthAdjust="spacingAndGlyphs">employment</text>
<text x="530.0" y="737.1" font-size="7.20" textLength="91.2" lengthAdjust="spacingAndGlyphs">Employer identification</text>
<text x="530.0" y="746.9" font-size="7.20" textLength="52.0" lengthAdjust="spacingAndGlyphs">number (EIN)</text>
<rect x="40.0" y="778.3" width="604.0" height="1.8" fill="#222"/>
<text x="40.0" y="790.7" font-size="7.60" font-weight="bold" textLength="279.2" lengthAdjust="spacingAndGlyphs">For Privacy Act and Paperwork Reduction Act Notice, see page 3.</text>
<text x="416.8" y="789.4" font-size="6.20" textLength="58.6" lengthAdjust="spacingAndGlyphs">Cat. No. 10220Q</text>
<text x="578.0" y="790.0" font-size="6.20" textLength="18.0" lengthAdjust="spacingAndGlyphs">Form</text>
<text x="598.0" y="790.3" font-size="11.20" font-weight="bold" textLength="22.6" lengthAdjust="spacingAndGlyphs">W-4</text>
<text x="623.0" y="790.0" font-size="6.20" textLength="21.0" lengthAdjust="spacingAndGlyphs">(2024)</text>
<rect x="103.6" y="547.4" width="296.4" height="111.4" fill="#fff" stroke="#222" stroke-width="1.4"/>
<rect x="412.8" y="633.6" width="106.6" height="34.4" fill="#fff" stroke="#222" stroke-width="1.4"/>
</svg><!--FORM_E--></div>
<div class="abs" style="left:604px;top:48px;width:13px;height:413px;background:#fbfbfb"></div>
<div class="abs" style="left:607.500px;top:64px;width:6.500px;height:112px;border-radius:3px;background:#9a9a9a"></div>
<svg class="abs" style="left:606px;top:53px" width="9" height="5" viewBox="0 0 9 5"><path fill="#8a8a8a" d="M0 5L4.500 0 9 5z"/></svg>
</div>
<div id="btoolbar" class="abs">
<div class="tdiv" style="left:92.500px"></div><div class="tdiv" style="left:134.500px"></div><div class="tdiv" style="left:252.500px"></div>
<svg class="abs" style="left:10.500px;top:9.500px" width="20" height="20" viewBox="0 0 24 24"><path fill="#1e1e1e" fill-rule="evenodd" d="M12.848 8a1 1 0 0 1-.914-.594l-.723-1.630a.5.500 0 0 0-.447-.276H5a.5.500 0 0 0-.5.500v11.500a.5.500 0 0 0 .5.500h14a.5.500 0 0 0 .5-.5v-9A.5.500 0 0 0 19 8h-6.152Zm.612-1.500a.5.500 0 0 1-.462-.31l-.445-1.084A2 2 0 0 0 10.763 4H5a2 2 0 0 0-2 2v11.500a2 2 0 0 0 2 2h14a2 2 0 0 0 2-2v-9a2 2 0 0 0-2-2h-5.540Z"/></svg>
<svg class="abs" style="left:36.500px;top:9.500px" width="20" height="20" viewBox="0 0 24 24"><path fill="#1e1e1e" d="M8 7h2V5H8v2zm0 6h2v-2H8v2zm0 6h2v-2H8v2zm6-14v2h2V5h-2zm0 8h2v-2h-2v2zm0 6h2v-2h-2v2z"/></svg>
<svg class="abs" style="left:62px;top:3.500px" width="20" height="20" viewBox="0 0 24 24"><path fill="#1e1e1e" d="M6.500 12.400L12 8l5.500 4.400-.9 1.200L12 10l-4.500 3.600-1-1.200z"/></svg>
<svg class="abs" style="left:62px;top:15.500px" width="20" height="20" viewBox="0 0 24 24"><path fill="#1e1e1e" d="M17.500 11.600L12 16l-5.500-4.400.9-1.200L12 14l4.600-3.600.9 1.200z"/></svg>
<svg class="abs" style="left:103.500px;top:9.500px" width="20" height="20" viewBox="0 0 24 24"><path fill="#1e1e1e" d="M19 5.500H5V4h14v1.500ZM19 20H5v-1.500h14V20ZM5 9h14v6H5V9Z"/></svg>
<span class="abs" style="left:145.500px;top:0;line-height:41px;font-size:11px;letter-spacing:-0.2px;white-space:nowrap">Replace</span>
<span class="abs" style="left:193.500px;top:0;line-height:41px;font-size:11px;letter-spacing:-0.2px;white-space:nowrap">Copy URL</span>
<svg class="abs" style="left:263.500px;top:9.500px" width="20" height="20" viewBox="0 0 24 24"><path fill="#1e1e1e" d="M13 19h-2v-2h2v2zm0-6h-2v-2h2v2zm0-6h-2V5h2v2z"/></svg>
</div>
<div id="right" class="abs"></div>
<div id="rwrap" class="abs" style="left:0;top:0;width:0;height:0">
<span class="tab" style="left:1085px;top:49px">Post</span><span class="tab" style="left:1133px;top:49px">Block</span>
<div class="abs" style="left:1071px;top:88px;width:229px;height:1px;background:#e0e0e0"></div>
<div class="abs" style="left:1119px;top:87px;width:53px;height:2px;background:#3858e9"></div>
<svg class="abs" style="left:1266.400px;top:57.500px" width="21" height="21" viewBox="0 0 24 24"><path fill="#1e1e1e" d="M12 13.060l3.712 3.713 1.061-1.060L13.061 12l3.712-3.712-1.060-1.060L12 10.938 8.288 7.227l-1.061 1.060L10.939 12l-3.712 3.712 1.060 1.061L12 13.061z"/></svg>

<svg class="abs" style="left:1085px;top:102px" width="20" height="20" viewBox="0 0 24 24"><path fill="#1e1e1e" fill-rule="evenodd" d="M12.848 8a1 1 0 0 1-.914-.594l-.723-1.630a.5.500 0 0 0-.447-.276H5a.5.500 0 0 0-.5.500v11.500a.5.500 0 0 0 .5.500h14a.5.500 0 0 0 .5-.5v-9A.5.500 0 0 0 19 8h-6.152Zm.612-1.500a.5.500 0 0 1-.462-.31l-.445-1.084A2 2 0 0 0 10.763 4H5a2 2 0 0 0-2 2v11.500a2 2 0 0 0 2 2h14a2 2 0 0 0 2-2v-9a2 2 0 0 0-2-2h-5.540Z"/></svg>
<div class="rt" style="left:1116px;top:106px;font-weight:bold;font-size:11px;letter-spacing:-0.3px">File</div>
<div class="rt" style="left:1116px;top:127px">Add a link to a downloadable file.</div>
<div class="rt" style="left:1116px;top:151px;color:#3858e9;font-size:11px;text-decoration:underline">Learn more</div>

<!-- settings / styles tabs -->
<svg class="abs" style="left:1121px;top:193.400px" width="13.600" height="13.600" viewBox="0 0 24 24"><path fill="#1e1e1e" fill-rule="evenodd" d="M19.850 8.750l4.150.83v4.840l-4.150.83 2.350 3.520-3.430 3.430-3.520-2.350-.83 4.150H9.580l-.83-4.150-3.520 2.350-3.430-3.430 2.350-3.520L0 14.420V9.580l4.150-.83L1.800 5.230 5.230 1.800l3.520 2.350L9.580 0h4.840l.83 4.150 3.520-2.350 3.430 3.430-2.350 3.520zM12 16.700a4.700 4.700 0 1 0 0-9.400 4.700 4.700 0 0 0 0 9.400z"/></svg>
<svg class="abs" style="left:1234px;top:193px" width="14" height="14" viewBox="0 0 14 14"><circle cx="7" cy="7" r="6.100" fill="#fff" stroke="#1e1e1e" stroke-width="1.700"/><path fill="#1e1e1e" d="M7 0.500A6.500 6.500 0 0 0 7 13.500z"/></svg>
<div class="abs" style="left:1071px;top:219px;width:229px;height:1px;background:#e0e0e0"></div>
<div class="abs" style="left:1071px;top:218.400px;width:113px;height:1.100px;background:#5468e4"></div>

<!-- purple highlight -->
<div class="abs" style="left:1071.500px;top:219.500px;width:225px;height:193.500px;border:5px solid #b88efa;border-radius:2px"></div>
<div class="rt" style="left:1085px;top:236px;font-weight:bold;font-size:10.6px;letter-spacing:-0.15px">PDF settings</div>
<svg class="abs" style="left:1264px;top:231px" width="20" height="20" viewBox="0 0 24 24"><path fill="#1e1e1e" d="M6.500 12.400L12 8l5.500 4.400-.9 1.200L12 10l-4.500 3.600-1-1.200z"/></svg>
<div class="abs" style="left:1081.500px;top:264px;width:34px;height:20.500px;border:1.500px solid #3858e9;border-radius:10.500px"></div>
<div class="abs" style="left:1084.500px;top:267px;width:28px;height:14.500px;background:#3858e9;border-radius:8px"></div>
<div class="abs" style="left:1100.500px;top:269px;width:10.500px;height:10.500px;background:#fff;border-radius:50%"></div>
<div class="rt" style="left:1119px;top:268px">Show inline embed</div>
<div class="rt note" style="left:1119px;top:289.500px">Note: Most phone and tablet</div>
<div class="rt note" style="left:1119px;top:305px">browsers won’t display embedded</div>
<div class="rt note" style="left:1119px;top:320px">PDFs.</div>
<div class="rt lbl" style="left:1085px;top:349px">HEIGHT IN PIXELS</div>
<div class="abs" style="left:1085px;top:383.500px;width:117px;height:3px;border-radius:2px;background:#ddd"></div>
<div class="abs" style="left:1085px;top:383.500px;width:26px;height:3px;border-radius:2px;background:#3858e9"></div>
<div class="abs" style="left:1105.500px;top:380px;width:10.500px;height:10.500px;border-radius:50%;background:#3858e9"></div>
<div class="abs" style="left:1215.500px;top:368.500px;width:69px;height:34px;border:1px solid #949494;border-radius:2px;background:#fff"></div>
<div class="rt" style="left:1225.500px;top:379px">600</div>
<div class="abs" style="left:1071px;top:415px;width:229px;height:1px;background:#e0e0e0"></div>

<div class="rt" style="left:1085px;top:431.500px;font-weight:bold;font-size:10.8px;letter-spacing:-0.15px">Settings</div>
<svg class="abs" style="left:1264px;top:427px" width="20" height="20" viewBox="0 0 24 24"><path fill="#1e1e1e" d="M6.500 12.400L12 8l5.500 4.400-.9 1.200L12 10l-4.500 3.600-1-1.200z"/></svg>
<div class="rt lbl" style="left:1085px;top:463.500px">LINK TO</div>
<div class="abs" style="left:1085px;top:483px;width:199.500px;height:33.500px;border:1px solid #949494;border-radius:2px;background:#fff"></div>
<div class="rt" style="left:1095px;top:493.500px">Media file</div>
<svg class="abs" style="left:1261px;top:490px" width="18" height="18" viewBox="0 0 24 24"><path fill="#1e1e1e" d="M17.500 11.600L12 16l-5.500-4.400.9-1.200L12 14l4.600-3.600.9 1.200z"/></svg>
<div class="abs" style="left:1085px;top:531px;width:27.500px;height:14px;border:1px solid #8a8a8a;border-radius:7px;background:#fff"></div>
<div class="abs" style="left:1087.500px;top:533.500px;width:9px;height:9px;border-radius:50%;background:#1e1e1e"></div>
<div class="rt" style="left:1119px;top:531.500px">Open in new tab</div>
<div class="abs" style="left:1085px;top:558.500px;width:27.500px;height:14px;border-radius:7px;background:#3858e9"></div>
<div class="abs" style="left:1100.500px;top:560.500px;width:10px;height:10px;border-radius:50%;background:#fff"></div>
<div class="rt" style="left:1119px;top:559px">Show download button</div>
</div>
<div class="abs" style="left:0;top:577px;width:1300px;height:3px;background:#fff;border-top:1px solid #e0e0e0"></div>
</div>
</body>
</html>
